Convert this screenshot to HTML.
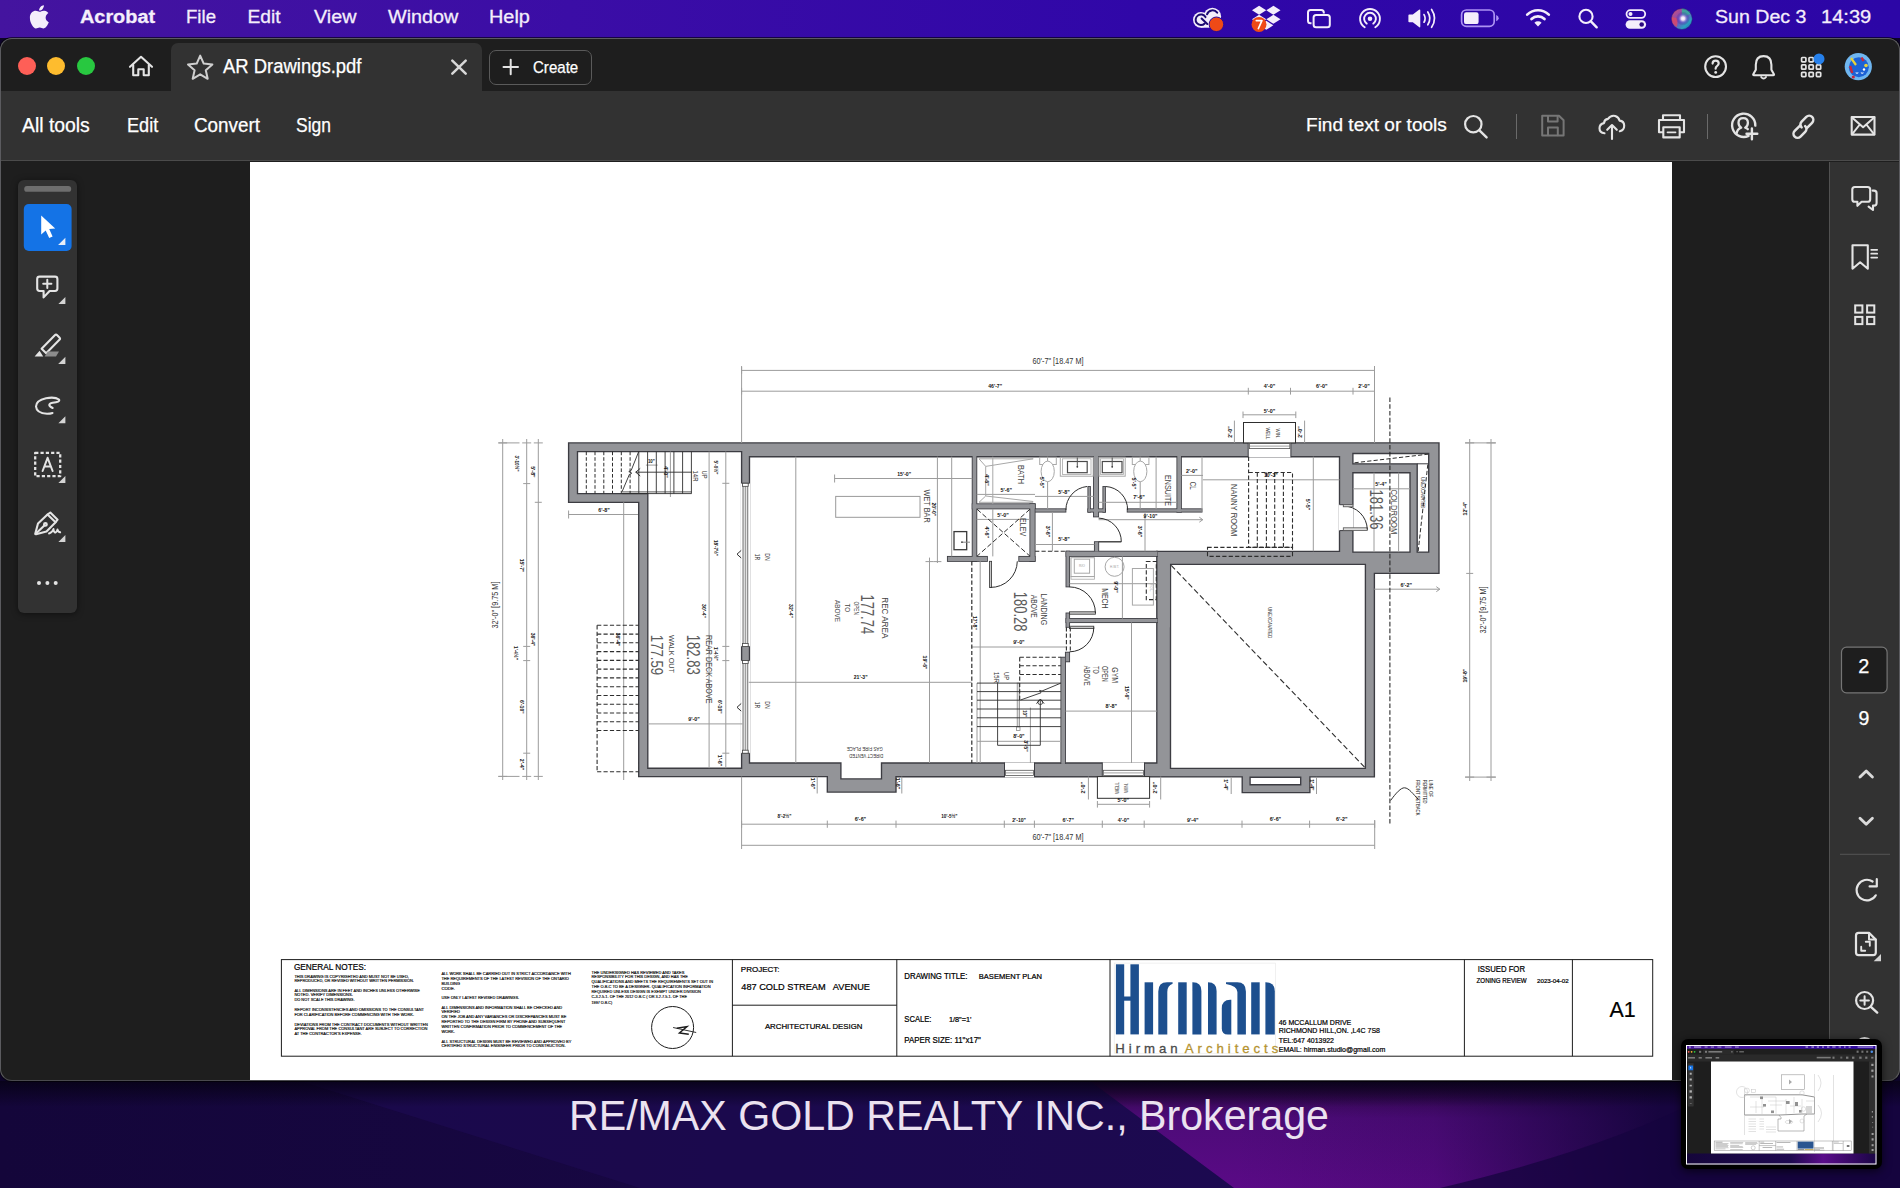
<!DOCTYPE html>
<html>
<head>
<meta charset="utf-8">
<title>AR Drawings.pdf</title>
<style>
*{box-sizing:border-box;margin:0;padding:0}
html,body{width:1900px;height:1188px;overflow:hidden;background:#17063f;font-family:"Liberation Sans",sans-serif}
.abs{position:absolute}
#wall{position:absolute;left:0;top:0;width:1900px;height:1188px;
 background:
  radial-gradient(ellipse 330px 130px at 1390px 1175px,rgba(98,10,140,.95),rgba(80,8,125,.55) 55%,rgba(60,6,110,0) 100%),
  linear-gradient(180deg,#0d0428 1081px,#1b0848 1100px,#19074a 1188px);}
#menubar{position:absolute;left:0;top:0;width:1900px;height:38px;background:linear-gradient(90deg,#44149f 0%,#3b0da6 30%,#3007a8 60%,#2c06a6 100%);}
.mt{-webkit-text-stroke:.3px #f4eefb;position:absolute;top:7.3px;color:#f4eefb;font-size:19.2px;line-height:1;white-space:nowrap;transform-origin:0 50%}
#win{position:absolute;left:0;top:38px;width:1900px;height:1043px;background:#1e1e1e;border-radius:12px 12px 12px 12px;overflow:hidden;box-shadow:0 0 0 1px rgba(0,0,0,.6)}
#winborder{position:absolute;left:0;top:38px;width:1900px;height:1043px;border-radius:12px;border:1px solid #5b5b5f;border-bottom-color:#4a4a4e;pointer-events:none}
#tabbar{position:absolute;left:0;top:0;width:1900px;height:53px;background:#1e1e1e}
#tab{position:absolute;left:171px;top:5px;width:311px;height:50px;background:#323232;border-radius:7px 7px 0 0}
#toolbar{position:absolute;left:0;top:53px;width:1900px;height:70px;background:#323232;border-bottom:1px solid #4b4b4b}
.tt{-webkit-text-stroke:.25px #fff;position:absolute;color:#fff;white-space:nowrap;transform-origin:0 50%;line-height:1}
#page{position:absolute;left:250px;top:124px;width:1422px;height:919px;background:#fff}
#rpanel{position:absolute;left:1829px;top:124px;width:71px;height:919px;background:#323232;border-left:1px solid #515151}
#palette{position:absolute;left:18px;top:142px;width:59px;height:433px;background:#323232;border-radius:6px;box-shadow:0 1px 6px rgba(0,0,0,.5)}
svg{position:absolute;overflow:visible}
</style>
</head>
<body>
<div id="wall"></div>
<svg id="wallshape" style="left:0;top:1081px" width="1900" height="107" viewBox="0 1081 1900 107">
 <defs>
  <linearGradient id="wg1" x1="0" y1="0" x2="1" y2="0"><stop offset="0" stop-color="#14063a"/><stop offset="1" stop-color="#1d0a52"/></linearGradient>
  <linearGradient id="wg2" x1="0" y1="0" x2="0" y2="1"><stop offset="0" stop-color="#2a0640"/><stop offset=".35" stop-color="#4d0b78"/><stop offset="1" stop-color="#5a0a86"/></linearGradient>
  <linearGradient id="wg3" x1="0" y1="0" x2="1" y2="0"><stop offset="0" stop-color="#17053f" stop-opacity="0"/><stop offset=".3" stop-color="#17053f" stop-opacity=".15"/><stop offset=".52" stop-color="#17053f" stop-opacity=".7"/><stop offset=".64" stop-color="#17053f" stop-opacity="1"/><stop offset="1" stop-color="#17053f" stop-opacity="1"/></linearGradient>
  <linearGradient id="wg4" x1="0" y1="0" x2="0" y2="1"><stop offset="0" stop-color="#070216" stop-opacity=".9"/><stop offset="1" stop-color="#070216" stop-opacity="0"/></linearGradient>
 </defs>
 <rect x="0" y="1081" width="1900" height="107" fill="url(#wg1)"/>
 <polygon points="300,1081 1090,1081 1234,1188 640,1188" fill="#1f0b55" opacity=".55"/>
 <polygon points="1090,1081 1900,1081 1900,1188 1234,1188" fill="url(#wg2)"/>
 <rect x="1234" y="1081" width="666" height="107" fill="url(#wg3)"/>
 <path d="M1440,1188 Q1600,1150 1700,1100 L1900,1081 L1900,1188 Z" fill="#16043f" opacity=".75"/>
 <rect x="0" y="1081" width="1900" height="26" fill="url(#wg4)"/>
</svg>

<!-- ===== MENU BAR ===== -->
<div id="menubar">
 <svg style="left:27.800px;top:3.900px" width="22.800" height="26.800" viewBox="0 0 170 200"><path fill="#f4eefb" d="M150.4 68.2c-1 .8-18.800 10.800-18.800 33 0 25.700 22.600 34.800 23.300 35-.1.600-3.600 12.500-11.900 24.600-7.400 10.700-15.200 21.300-27 21.300s-14.800-6.800-28.400-6.800c-13.300 0-18 7.100-28.800 7.100s-18.300-9.900-27-22C21.800 146.100 14 123.800 14 102.600c0-34 22.100-52 43.900-52 11.600 0 21.200 7.600 28.500 7.600 6.900 0 17.700-8.100 30.900-8.100 5 0 22.900.5 34.700 17.400zM109.400 36.500c5.400-6.500 9.300-15.400 9.300-24.400 0-1.200-.1-2.500-.3-3.500-8.900.3-19.400 5.900-25.800 13.300-5 5.700-9.700 14.700-9.700 23.800 0 1.400.2 2.700.3 3.200.6.100 1.500.2 2.400.2 8 0 18-5.300 23.800-12.600z"/></svg>
 <div class="mt" style="left:79.6px;font-weight:bold;transform:scaleX(1.035)" id="m_acrobat">Acrobat</div>
 <div class="mt" style="left:185.5px;transform:scaleX(.97)" id="m_file">File</div>
 <div class="mt" style="left:247.5px" id="m_edit">Edit</div>
 <div class="mt" style="left:314px;transform:scaleX(1.03)" id="m_view">View</div>
 <div class="mt" style="left:388px;transform:scaleX(1.03)" id="m_window">Window</div>
 <div class="mt" style="left:488.5px;transform:scaleX(1.037)" id="m_help">Help</div>

 <!-- creative cloud -->
 <svg style="left:1190px;top:4px" width="36" height="30" viewBox="1190 4 36 30">
  <g fill="#f4eefb"><circle cx="1200.900" cy="19.800" r="7.900"/><circle cx="1212.400" cy="16.400" r="8.700"/><rect x="1200.900" y="20" width="13" height="7.700"/></g>
  <g fill="none" stroke="#1c0a72" stroke-width="2" stroke-linecap="round">
   <path d="M1204.700,23.500 A5.300,5.300 0 1 1 1205.500,17.100"/>
   <path d="M1201.600,18.500 L1207.300,24"/>
   <path d="M1207,14.300 A5.900,5.900 0 0 1 1217.200,12.600"/>
  </g>
  <circle cx="1216.400" cy="24.300" r="7.300" fill="#ef4a17" stroke="#2d0a96" stroke-width="1"/>
 </svg>
 <!-- dropbox -->
 <svg style="left:1250px;top:4px" width="34" height="30" viewBox="1250 4 34 30">
  <g fill="#f4eefb">
   <path d="M1259.100,5.800 L1266.200,10.300 L1259.100,14.800 L1252,10.300 Z"/>
   <path d="M1273.400,5.800 L1280.500,10.300 L1273.400,14.800 L1266.300,10.300 Z"/>
   <path d="M1259.100,14.800 L1266.200,19.300 L1259.100,23.800 L1252,19.300 Z"/>
   <path d="M1273.400,14.800 L1280.500,19.300 L1273.400,23.800 L1266.300,19.300 Z"/>
   <path d="M1266.250,20.800 L1273.300,25.300 L1266.250,29.800 L1259.200,25.300 Z"/>
  </g>
  <circle cx="1259" cy="24.400" r="7.500" fill="#ef4a17"/>
  <path d="M1256.300,20.600 h5.600 l-3.500,7.900" fill="none" stroke="#fff" stroke-width="1.700" stroke-linecap="round" stroke-linejoin="round"/>
 </svg>
 <!-- window stack -->
 <svg style="left:1305px;top:6px" width="30" height="26" viewBox="1305 6 30 26">
  <g fill="none" stroke="#f4eefb" stroke-width="2">
   <path d="M1311.500,23.200 H1310.500 Q1308,23.200 1308,20.700 V12.500 Q1308,10 1310.500,10 H1321.300 Q1323.800,10 1323.800,12.500 V13.500"/>
   <rect x="1313.600" y="14.900" width="16.200" height="12.400" rx="2.500"/>
  </g>
 </svg>
 <!-- airplay-ish -->
 <svg style="left:1357px;top:5px" width="26" height="28" viewBox="1357 5 26 28">
  <g fill="none" stroke="#f4eefb" stroke-width="1.900" stroke-linecap="round">
   <path d="M1364.700,27.200 A9.900,9.900 0 1 1 1375.300,27.200"/>
   <path d="M1366.700,23.600 A5.900,5.900 0 1 1 1373.300,23.600"/>
  </g>
  <circle cx="1370" cy="18.700" r="2.300" fill="#f4eefb"/>
 </svg>
 <!-- volume -->
 <svg style="left:1406px;top:6px" width="32" height="26" viewBox="1406 6 32 26">
  <path d="M1409.200,14.600 h3.600 l6.200,-4.900 q1.300,-.8 1.300,.7 v16 q0,1.500 -1.300,.7 l-6.200,-4.900 h-3.600 q-.8,0 -.8,-.8 v-6 q0,-.8 .8,-.8z" fill="#f4eefb"/>
  <g fill="none" stroke="#f4eefb" stroke-width="1.700" stroke-linecap="round">
   <path d="M1424,14.600 q2.300,3.800 0,7.600"/>
   <path d="M1427.800,12 q4.100,6.400 0,12.800"/>
   <path d="M1431.600,9.500 q5.900,8.900 0,17.800"/>
  </g>
 </svg>
 <!-- battery -->
 <svg style="left:1458px;top:6px" width="44" height="26" viewBox="1458 6 44 26">
  <rect x="1461.600" y="10" width="32.600" height="16.300" rx="4.800" fill="none" stroke="#ad93f3" stroke-width="1.700"/>
  <rect x="1464" y="12.200" width="14.600" height="11.900" rx="2.200" fill="#f4eefb"/>
  <path d="M1496.200,15 q2.500,1 2.500,3.150 t-2.500,3.150z" fill="#ad93f3"/>
 </svg>
 <!-- wifi -->
 <svg style="left:1522px;top:5px" width="32" height="26" viewBox="1522 5 32 26">
  <g fill="none" stroke="#f4eefb" stroke-width="2.700" stroke-linecap="round">
   <path d="M1527.200,14.600 A15.600,15.600 0 0 1 1548.800,14.600"/>
   <path d="M1531.500,19 A9.400,9.400 0 0 1 1544.500,19"/>
  </g>
  <path d="M1538,26.400 L1534.400,22.700 A5.200,5.200 0 0 1 1541.600,22.700 Z" fill="#f4eefb"/>
 </svg>
 <!-- search -->
 <svg style="left:1576px;top:6px" width="26" height="26" viewBox="1576 6 26 26">
  <circle cx="1586" cy="16.400" r="6.600" fill="none" stroke="#f4eefb" stroke-width="2.100"/>
  <path d="M1590.900,21.400 L1596.700,27.300" stroke="#f4eefb" stroke-width="2.400" stroke-linecap="round"/>
 </svg>
 <!-- control center -->
 <svg style="left:1622px;top:6px" width="28" height="26" viewBox="1622 6 28 26">
  <rect x="1626.500" y="10.200" width="18.700" height="7.700" rx="3.850" fill="none" stroke="#f4eefb" stroke-width="1.800"/>
  <circle cx="1630.500" cy="14.050" r="2" fill="#f4eefb"/>
  <rect x="1625.600" y="20.200" width="20.500" height="8.600" rx="4.300" fill="#f4eefb"/>
  <circle cx="1641.700" cy="24.500" r="2.300" fill="#2a087f"/>
 </svg>
 <!-- siri -->
 <svg style="left:1670px;top:7px" width="24" height="24" viewBox="1670 7 24 24">
  <defs>
   <radialGradient id="si1" cx=".5" cy=".5" r=".5"><stop offset="0" stop-color="#fff"/><stop offset=".25" stop-color="#e9dff5"/><stop offset=".6" stop-color="#6a55c8" stop-opacity=".6"/><stop offset="1" stop-color="#2b1a7a" stop-opacity="0"/></radialGradient>
   <linearGradient id="si2" x1="0" y1="0" x2="1" y2="1"><stop offset="0" stop-color="#e0506a"/><stop offset=".45" stop-color="#7a4ac0"/><stop offset=".75" stop-color="#29a3c0"/><stop offset="1" stop-color="#2b3fb0"/></linearGradient>
  </defs>
  <circle cx="1681.800" cy="19" r="10.500" fill="url(#si2)"/>
  <path d="M1681.800,8.500 a10.500,10.500 0 0 1 9,5 q-4,3 -9,3z" fill="#2fb79a" opacity=".8"/>
  <path d="M1671.500,17 a10.500,10.500 0 0 0 5,10 q2,-5 0,-9z" fill="#e4485f" opacity=".75"/>
  <circle cx="1683" cy="18.500" r="7" fill="url(#si1)"/>
  <circle cx="1681.800" cy="19" r="10.500" fill="none" stroke="#241070" stroke-opacity=".5" stroke-width="1"/>
 </svg>
 <div class="mt" style="left:1715px;transform:scaleX(1.02)" id="m_date">Sun Dec 3</div>
 <div class="mt" style="left:1820.5px;transform:scaleX(1.047)" id="m_time">14:39</div>
</div>

<!-- ===== WINDOW ===== -->
<div id="win">
 <div id="tabbar">
  <div class="abs" style="left:18px;top:19px;width:18px;height:18px;border-radius:50%;background:#fe5f57"></div>
  <div class="abs" style="left:47px;top:19px;width:18px;height:18px;border-radius:50%;background:#febc2e"></div>
  <div class="abs" style="left:77px;top:19px;width:18px;height:18px;border-radius:50%;background:#28c840"></div>
  <div id="tab"></div>
  <div class="tt" style="left:223.3px;top:19.1px;font-size:19.5px;transform:scaleX(.946)" id="t_tab">AR Drawings.pdf</div>
  <div class="abs" style="left:489px;top:12px;width:103px;height:35px;border:1px solid #5a5a5a;border-radius:7px;background:#1e1e1e"></div>
  <div class="tt" style="left:532.5px;top:20.5px;font-size:17.2px;transform:scaleX(.876)" id="t_create">Create</div>
 </div>
 <div id="toolbar">
  <div class="tt" style="left:22px;top:25.2px;font-size:19.5px;transform:scaleX(.993)" id="t_all">All tools</div>
  <div class="tt" style="left:126.6px;top:25.2px;font-size:19.5px;transform:scaleX(.93)" id="t_edit">Edit</div>
  <div class="tt" style="left:194px;top:25.2px;font-size:19.5px;transform:scaleX(.967)" id="t_conv">Convert</div>
  <div class="tt" style="left:296px;top:25.2px;font-size:19.5px;transform:scaleX(.895)" id="t_sign">Sign</div>
  <div class="tt" style="left:1305.5px;top:23.7px;font-size:19.2px;transform:scaleX(.993)" id="t_find">Find text or tools</div>
  <div class="abs" style="left:1516px;top:23px;width:1px;height:25px;background:#6a6a6a"></div>
  <div class="abs" style="left:1707px;top:23px;width:1px;height:25px;background:#6a6a6a"></div>
 </div>
 <div id="page"></div>
 <div id="rpanel"></div>
 <div id="palette"></div>
</div>
<div id="winborder"></div>
<!-- PLAN-START -->
<svg id="plan" style="left:0;top:0" width="1900" height="1188" viewBox="0 0 1900 1188" font-family="Liberation Sans, sans-serif">
<path d="M568.6,442.9 L1439,442.9 L1439,573.4 L1374.4,573.4 L1374.4,776.9 L1309.9,776.9 L1309.9,792.6 L1242.2,792.6 L1242.2,776.9 L896,776.6 L896,792.1 L827.3,792.1 L827.3,776.6 L638.7,776.6 L638.7,502.3 L568.6,502.3 Z M577.5,451.6 L741.6,451.6 L741.6,768.2 L647.8,768.2 L647.8,493.6 L577.5,493.6 Z M749.5,456.7 L1339.5,456.7 L1339.5,551.3 L1156.8,551.3 L1156.8,763 L881.5,763 L881.5,778.9 L840.9,778.9 L840.9,763 L749.5,763 Z M1352.9,472.7 L1410,472.7 L1410,552.1 L1352.9,552.1 Z M1352.9,453.5 L1428.7,453.5 L1428.7,552.1 L1417.2,552.1 L1417.2,463.8 L1352.9,463.8 Z M1170.5,564.4 L1365.4,564.4 L1365.4,768.3 L1170.5,768.3 Z M1250.1,777.2 L1300.7,777.2 L1300.7,784.7 L1250.1,784.7 Z" fill="#939498" fill-rule="evenodd" stroke="#3c3c42" stroke-width="1.35" stroke-linejoin="miter"/>
<path d="M1417.2,463.8 L1428.7,463.8" stroke="#3c3c42" stroke-width="1" fill="none"/>
<rect x="1248.2" y="442.3" width="42.7" height="15" fill="#fff"/>
<path d="M1248.2,442.3 L1248.2,457.3" stroke="#3c3c42" stroke-width="1" fill="none"/><path d="M1290.9,442.3 L1290.9,457.3" stroke="#3c3c42" stroke-width="1" fill="none"/>
<rect x="1249.4" y="443.6" width="40.4" height="5" fill="#fff" stroke="#555" stroke-width="0.8"/><path d="M1249.4,446.1 L1289.8,446.1" stroke="#777" stroke-width="0.7" fill="none"/>
<rect x="1004.5" y="762.4" width="30" height="15" fill="#fff"/>
<path d="M1004.5,762.4 L1004.5,777.2" stroke="#3c3c42" stroke-width="1" fill="none"/><path d="M1034.5,762.4 L1034.5,777.2" stroke="#3c3c42" stroke-width="1" fill="none"/>
<rect x="1005.5" y="770.3" width="28" height="5.3" fill="#fff" stroke="#555" stroke-width="0.8"/><path d="M1005.5,772.9 L1033.5,772.9" stroke="#777" stroke-width="0.7" fill="none"/>
<rect x="1102.3" y="762.4" width="42.2" height="15" fill="#fff"/>
<path d="M1102.3,762.4 L1102.3,777.2" stroke="#3c3c42" stroke-width="1" fill="none"/><path d="M1144.5,762.4 L1144.5,777.2" stroke="#3c3c42" stroke-width="1" fill="none"/>
<rect x="1103.3" y="770.3" width="40.2" height="5.3" fill="#fff" stroke="#555" stroke-width="0.8"/><path d="M1103.3,772.9 L1143.5,772.9" stroke="#777" stroke-width="0.7" fill="none"/>
<rect x="1338.9" y="504.7" width="14.6" height="25.9" fill="#fff"/>
<path d="M1339.5,504.7 L1352.9,504.7" stroke="#3c3c42" stroke-width="1" fill="none"/><path d="M1339.5,530.6 L1352.9,530.6" stroke="#3c3c42" stroke-width="1" fill="none"/>
<rect x="741" y="483.3" width="9.1" height="163.1" fill="#fff"/>
<path d="M741.6,483.3 L749.5,483.3" stroke="#3c3c42" stroke-width="1" fill="none"/><path d="M741.6,646.4 L749.5,646.4" stroke="#3c3c42" stroke-width="1" fill="none"/>
<rect x="743" y="483.3" width="4.8" height="163.1" fill="#e4e4e4" stroke="#555" stroke-width="0.8"/><path d="M745.4,483.3 L745.4,646.4" stroke="#777" stroke-width="0.7" fill="none"/>
<rect x="742.6" y="483.3" width="5.6" height="3" fill="#fff" stroke="#444" stroke-width="0.8"/><rect x="742.6" y="643.4" width="5.6" height="3" fill="#fff" stroke="#444" stroke-width="0.8"/>
<rect x="741" y="660.6" width="9.1" height="92.6" fill="#fff"/>
<path d="M741.6,660.6 L749.5,660.6" stroke="#3c3c42" stroke-width="1" fill="none"/><path d="M741.6,753.2 L749.5,753.2" stroke="#3c3c42" stroke-width="1" fill="none"/>
<rect x="743" y="660.6" width="4.8" height="92.6" fill="#e4e4e4" stroke="#555" stroke-width="0.8"/><path d="M745.4,660.6 L745.4,753.2" stroke="#777" stroke-width="0.7" fill="none"/>
<rect x="742.6" y="660.6" width="5.6" height="3" fill="#fff" stroke="#444" stroke-width="0.8"/><rect x="742.6" y="750.2" width="5.6" height="3" fill="#fff" stroke="#444" stroke-width="0.8"/>
<rect x="972.6" y="457.1" width="3.8" height="103.9" fill="none" stroke="#3c3c42" stroke-width="1.7"/>
<rect x="947.8" y="556.8" width="39.2" height="4.2" fill="none" stroke="#3c3c42" stroke-width="1.7"/>
<rect x="1019.2" y="556.8" width="15.5" height="4.2" fill="none" stroke="#3c3c42" stroke-width="1.7"/>
<rect x="972.6" y="504.2" width="62.2" height="4.3" fill="none" stroke="#3c3c42" stroke-width="1.7"/>
<rect x="1030.3" y="504.2" width="4.4" height="56.7" fill="none" stroke="#3c3c42" stroke-width="1.7"/>
<rect x="1035.4" y="509.2" width="30.1" height="2.5" fill="none" stroke="#3c3c42" stroke-width="1.7"/>
<rect x="1088.3" y="509.2" width="16.7" height="2.5" fill="none" stroke="#3c3c42" stroke-width="1.7"/>
<rect x="1127.6" y="509.2" width="74" height="2.5" fill="none" stroke="#3c3c42" stroke-width="1.7"/>
<rect x="1088.3" y="486.9" width="1.7" height="24.9" fill="none" stroke="#3c3c42" stroke-width="1.7"/>
<rect x="1103.3" y="486.9" width="1.7" height="24.9" fill="none" stroke="#3c3c42" stroke-width="1.7"/>
<rect x="1093.9" y="457.1" width="4.3" height="59.4" fill="none" stroke="#3c3c42" stroke-width="1.7"/>
<rect x="1177.3" y="457.1" width="3.7" height="54.7" fill="none" stroke="#3c3c42" stroke-width="1.7"/>
<rect x="1066.5" y="551.6" width="90.5" height="4.4" fill="none" stroke="#3c3c42" stroke-width="1.7"/>
<rect x="1094.8" y="542.1" width="3.5" height="9.3" fill="none" stroke="#3c3c42" stroke-width="1.7"/>
<rect x="1066.4" y="551.6" width="2.8" height="34.9" fill="none" stroke="#3c3c42" stroke-width="1.7"/>
<rect x="1066.4" y="613.4" width="2.8" height="13.5" fill="none" stroke="#3c3c42" stroke-width="1.7"/>
<rect x="1066.4" y="618.9" width="90.6" height="3.3" fill="none" stroke="#3c3c42" stroke-width="1.7"/>
<rect x="1061.3" y="657.6" width="3.8" height="105.4" fill="none" stroke="#3c3c42" stroke-width="1.7"/>
<rect x="1065.8" y="652.6" width="3.4" height="8.8" fill="none" stroke="#3c3c42" stroke-width="1.7"/>
<rect x="940" y="444" width="250" height="12" fill="#939498"/>
<rect x="1055" y="764.2" width="16" height="11.6" fill="#939498"/>
<rect x="1158" y="552.4" width="11.8" height="75" fill="#939498"/>
<rect x="972.6" y="455.8" width="3.8" height="105.2" fill="#939498"/>
<rect x="947.8" y="556.8" width="39.2" height="4.2" fill="#939498"/>
<rect x="1019.2" y="556.8" width="15.5" height="4.2" fill="#939498"/>
<rect x="972.6" y="504.2" width="62.2" height="4.3" fill="#939498"/>
<rect x="1030.3" y="504.2" width="4.4" height="56.7" fill="#939498"/>
<rect x="1035.4" y="509.2" width="30.1" height="2.5" fill="#939498"/>
<rect x="1088.3" y="509.2" width="16.7" height="2.5" fill="#939498"/>
<rect x="1127.6" y="509.2" width="74" height="2.5" fill="#939498"/>
<rect x="1088.3" y="486.9" width="1.7" height="24.9" fill="#939498"/>
<rect x="1103.3" y="486.9" width="1.7" height="24.9" fill="#939498"/>
<rect x="1093.9" y="455.8" width="4.3" height="60.7" fill="#939498"/>
<rect x="1177.3" y="455.8" width="3.7" height="56" fill="#939498"/>
<rect x="1066.5" y="551.6" width="91" height="4.4" fill="#939498"/>
<rect x="1094.8" y="542.1" width="3.5" height="9.3" fill="#939498"/>
<rect x="1066.4" y="551.6" width="2.8" height="34.9" fill="#939498"/>
<rect x="1066.4" y="613.4" width="2.8" height="13.5" fill="#939498"/>
<rect x="1066.4" y="618.9" width="91.1" height="3.3" fill="#939498"/>
<rect x="1061.3" y="657.6" width="3.8" height="106.3" fill="#939498"/>
<rect x="1065.8" y="652.6" width="3.4" height="8.8" fill="#939498"/>
<g><path d="M741.6,370.4 L1374.5,370.4" stroke="#9c9c9c" stroke-width="1" fill="none"/><path d="M741.6,391.2 L1374.5,391.2" stroke="#9c9c9c" stroke-width="1" fill="none"/><path d="M741.6,366 L741.6,442.9" stroke="#9c9c9c" stroke-width="1" fill="none"/><path d="M1374.5,366 L1374.5,442.9" stroke="#9c9c9c" stroke-width="1" fill="none"/><path d="M741.6,387.8 L741.6,394.6" stroke="#9c9c9c" stroke-width="1" fill="none"/><path d="M1248.3,387.8 L1248.3,394.6" stroke="#9c9c9c" stroke-width="1" fill="none"/><path d="M1290.5,387.8 L1290.5,394.6" stroke="#9c9c9c" stroke-width="1" fill="none"/><path d="M1353,387.8 L1353,394.6" stroke="#9c9c9c" stroke-width="1" fill="none"/><path d="M1374.5,387.8 L1374.5,394.6" stroke="#9c9c9c" stroke-width="1" fill="none"/><path d="M741.6,367 L741.6,373.8" stroke="#9c9c9c" stroke-width="1" fill="none"/><path d="M1374.5,367 L1374.5,373.8" stroke="#9c9c9c" stroke-width="1" fill="none"/><path d="M741.6,824.2 L1374.7,824.2" stroke="#9c9c9c" stroke-width="1" fill="none"/><path d="M741.6,845.3 L1374.7,845.3" stroke="#9c9c9c" stroke-width="1" fill="none"/><path d="M741.6,776.6 L741.6,849" stroke="#9c9c9c" stroke-width="1" fill="none"/><path d="M1374.7,820 L1374.7,849" stroke="#9c9c9c" stroke-width="1" fill="none"/><path d="M741.6,820.6 L741.6,827.8" stroke="#9c9c9c" stroke-width="1" fill="none"/><path d="M827.3,820.6 L827.3,827.8" stroke="#9c9c9c" stroke-width="1" fill="none"/><path d="M896,820.6 L896,827.8" stroke="#9c9c9c" stroke-width="1" fill="none"/><path d="M1004.3,820.6 L1004.3,827.8" stroke="#9c9c9c" stroke-width="1" fill="none"/><path d="M1034.4,820.6 L1034.4,827.8" stroke="#9c9c9c" stroke-width="1" fill="none"/><path d="M1102.3,820.6 L1102.3,827.8" stroke="#9c9c9c" stroke-width="1" fill="none"/><path d="M1144.2,820.6 L1144.2,827.8" stroke="#9c9c9c" stroke-width="1" fill="none"/><path d="M1242,820.6 L1242,827.8" stroke="#9c9c9c" stroke-width="1" fill="none"/><path d="M1309.6,820.6 L1309.6,827.8" stroke="#9c9c9c" stroke-width="1" fill="none"/><path d="M1374.7,820.6 L1374.7,827.8" stroke="#9c9c9c" stroke-width="1" fill="none"/><path d="M502.7,439 L502.7,780" stroke="#9c9c9c" stroke-width="1" fill="none"/><path d="M498.2,442.9 L507.2,442.9" stroke="#9c9c9c" stroke-width="1" fill="none"/><path d="M498.2,776.4 L507.2,776.4" stroke="#9c9c9c" stroke-width="1" fill="none"/><path d="M526.7,439 L526.7,780" stroke="#9c9c9c" stroke-width="1" fill="none"/><path d="M522.2,442.9 L531.2,442.9" stroke="#9c9c9c" stroke-width="1" fill="none"/><path d="M522.2,776.4 L531.2,776.4" stroke="#9c9c9c" stroke-width="1" fill="none"/><path d="M538.3,439 L538.3,780" stroke="#9c9c9c" stroke-width="1" fill="none"/><path d="M533.8,442.9 L542.8,442.9" stroke="#9c9c9c" stroke-width="1" fill="none"/><path d="M533.8,776.4 L542.8,776.4" stroke="#9c9c9c" stroke-width="1" fill="none"/><path d="M523.2,483.6 L530.2,483.6" stroke="#9c9c9c" stroke-width="1" fill="none"/><path d="M523.2,646.4 L530.2,646.4" stroke="#9c9c9c" stroke-width="1" fill="none"/><path d="M523.2,660.6 L530.2,660.6" stroke="#9c9c9c" stroke-width="1" fill="none"/><path d="M523.2,753.2 L530.2,753.2" stroke="#9c9c9c" stroke-width="1" fill="none"/><path d="M534.8,502.3 L541.8,502.3" stroke="#9c9c9c" stroke-width="1" fill="none"/><path d="M1469.7,439 L1469.7,781" stroke="#9c9c9c" stroke-width="1" fill="none"/><path d="M1465.2,442.9 L1474.2,442.9" stroke="#9c9c9c" stroke-width="1" fill="none"/><path d="M1465.2,777.1 L1474.2,777.1" stroke="#9c9c9c" stroke-width="1" fill="none"/><path d="M1491,439 L1491,781" stroke="#9c9c9c" stroke-width="1" fill="none"/><path d="M1486.5,442.9 L1495.5,442.9" stroke="#9c9c9c" stroke-width="1" fill="none"/><path d="M1486.5,777.1 L1495.5,777.1" stroke="#9c9c9c" stroke-width="1" fill="none"/><path d="M1466.2,573.4 L1473.2,573.4" stroke="#9c9c9c" stroke-width="1" fill="none"/><path d="M1465,442.9 L1496,442.9" stroke="#9c9c9c" stroke-width="1" fill="none"/><path d="M1465,777.1 L1496,777.1" stroke="#9c9c9c" stroke-width="1" fill="none"/><path d="M498.5,442.9 L519.5,442.9" stroke="#9c9c9c" stroke-width="1" fill="none"/><path d="M498.5,776.4 L519.5,776.4" stroke="#9c9c9c" stroke-width="1" fill="none"/><path d="M623.7,502.3 L623.7,780" stroke="#9c9c9c" stroke-width="1" fill="none"/><path d="M709.1,451.6 L709.1,768.2" stroke="#9c9c9c" stroke-width="1" fill="none"/><path d="M725.8,451.6 L725.8,768.2" stroke="#9c9c9c" stroke-width="1" fill="none"/><path d="M795.8,456.7 L795.8,763" stroke="#9c9c9c" stroke-width="1" fill="none"/><path d="M937.4,456.7 L937.4,563" stroke="#9c9c9c" stroke-width="1" fill="none"/><path d="M951.7,456.7 L951.7,556.4" stroke="#9c9c9c" stroke-width="1" fill="none"/><path d="M929.5,561.6 L929.5,763" stroke="#9c9c9c" stroke-width="1" fill="none"/><path d="M980.2,561.3 L980.2,763" stroke="#9c9c9c" stroke-width="1" fill="none"/><path d="M977,683 L977,763" stroke="#9c9c9c" stroke-width="1" fill="none"/><path d="M1030.4,707.6 L1030.4,763" stroke="#9c9c9c" stroke-width="1" fill="none"/><path d="M1131.5,622.5 L1131.5,763" stroke="#9c9c9c" stroke-width="1" fill="none"/><path d="M1122.4,556.4 L1122.4,618.5" stroke="#9c9c9c" stroke-width="1" fill="none"/><path d="M992.8,508.9 L992.8,556.4" stroke="#9c9c9c" stroke-width="1" fill="none"/><path d="M1052.4,512.1 L1052.4,551.3" stroke="#9c9c9c" stroke-width="1" fill="none"/><path d="M1145,512.1 L1145,551.3" stroke="#9c9c9c" stroke-width="1" fill="none"/><path d="M1202,456.7 L1202,512.1" stroke="#9c9c9c" stroke-width="1" fill="none"/><path d="M1156.1,456.7 L1156.1,508.9" stroke="#9c9c9c" stroke-width="1" fill="none"/><path d="M1313.3,456.7 L1313.3,551.3" stroke="#9c9c9c" stroke-width="1" fill="none"/><path d="M1374,472.7 L1374,552.1" stroke="#9c9c9c" stroke-width="1" fill="none"/><path d="M1398.6,472.7 L1398.6,552.1" stroke="#9c9c9c" stroke-width="1" fill="none"/><path d="M670.4,451.6 L670.4,497" stroke="#9c9c9c" stroke-width="1" fill="none"/><path d="M1234.4,420.6 L1234.4,442.9" stroke="#9c9c9c" stroke-width="1" fill="none"/><path d="M1304.6,420.6 L1304.6,442.9" stroke="#9c9c9c" stroke-width="1" fill="none"/><path d="M1088.4,776.6 L1088.4,799.5" stroke="#9c9c9c" stroke-width="1" fill="none"/><path d="M1160.7,776.6 L1160.7,799.5" stroke="#9c9c9c" stroke-width="1" fill="none"/><path d="M817.2,776.6 L817.2,793.5" stroke="#9c9c9c" stroke-width="1" fill="none"/><path d="M901.8,776.6 L901.8,793.5" stroke="#9c9c9c" stroke-width="1" fill="none"/><path d="M1231.2,776.9 L1231.2,794" stroke="#9c9c9c" stroke-width="1" fill="none"/><path d="M1316.5,776.9 L1316.5,794" stroke="#9c9c9c" stroke-width="1" fill="none"/><path d="M1047.6,456.7 L1047.6,508.9" stroke="#9c9c9c" stroke-width="1" fill="none"/><path d="M1140.2,456.7 L1140.2,508.9" stroke="#9c9c9c" stroke-width="1" fill="none"/><path d="M722.3,483.3 L729.3,483.3" stroke="#9c9c9c" stroke-width="1" fill="none"/><path d="M722.3,646.4 L729.3,646.4" stroke="#9c9c9c" stroke-width="1" fill="none"/><path d="M722.3,660.6 L729.3,660.6" stroke="#9c9c9c" stroke-width="1" fill="none"/><path d="M722.3,753.2 L729.3,753.2" stroke="#9c9c9c" stroke-width="1" fill="none"/><path d="M568.6,514.5 L638,514.5" stroke="#9c9c9c" stroke-width="1" fill="none"/><path d="M568.6,510.5 L568.6,518.5" stroke="#9c9c9c" stroke-width="1" fill="none"/><path d="M834.6,478.5 L972.2,478.5" stroke="#9c9c9c" stroke-width="1" fill="none"/><path d="M834.6,474.5 L834.6,482.5" stroke="#9c9c9c" stroke-width="1" fill="none"/><path d="M647.8,723.9 L742.7,723.9" stroke="#9c9c9c" stroke-width="1" fill="none"/><path d="M748.7,682.3 L972.2,682.3" stroke="#9c9c9c" stroke-width="1" fill="none"/><path d="M971.8,647 L1067.2,647" stroke="#9c9c9c" stroke-width="1" fill="none"/><path d="M977,741.3 L1060.9,741.3" stroke="#9c9c9c" stroke-width="1" fill="none"/><path d="M1065.5,711.1 L1156.8,711.1" stroke="#9c9c9c" stroke-width="1" fill="none"/><path d="M1069.6,583.7 L1156.8,583.7" stroke="#9c9c9c" stroke-width="1" fill="none"/><path d="M976.7,519.4 L1030,519.4" stroke="#9c9c9c" stroke-width="1" fill="none"/><path d="M976.7,494.4 L1035,494.4" stroke="#9c9c9c" stroke-width="1" fill="none"/><path d="M1035,496.4 L1093.6,496.4" stroke="#9c9c9c" stroke-width="1" fill="none"/><path d="M1098.6,502.3 L1177,502.3" stroke="#9c9c9c" stroke-width="1" fill="none"/><path d="M1035,544.5 L1094.4,544.5" stroke="#9c9c9c" stroke-width="1" fill="none"/><path d="M1098.6,519.7 L1202.8,519.7" stroke="#9c9c9c" stroke-width="1" fill="none"/><path d="M1181.4,475.4 L1203,475.4" stroke="#9c9c9c" stroke-width="1" fill="none"/><path d="M1202.8,479.8 L1339.5,479.8" stroke="#9c9c9c" stroke-width="1" fill="none"/><path d="M1352.9,488.8 L1410,488.8" stroke="#9c9c9c" stroke-width="1" fill="none"/><path d="M1374.2,589.2 L1439.8,589.2" stroke="#9c9c9c" stroke-width="1" fill="none"/><path d="M1243,414.8 L1295.8,414.8" stroke="#9c9c9c" stroke-width="1" fill="none"/><path d="M1097.4,804.3 L1149.6,804.3" stroke="#9c9c9c" stroke-width="1" fill="none"/><path d="M645.9,465.1 L657.7,465.1" stroke="#9c9c9c" stroke-width="1" fill="none"/><path d="M1243,411.5 L1243,418.1" stroke="#9c9c9c" stroke-width="1" fill="none"/><path d="M1295.8,411.5 L1295.8,418.1" stroke="#9c9c9c" stroke-width="1" fill="none"/><path d="M1097.4,801 L1097.4,807.6" stroke="#9c9c9c" stroke-width="1" fill="none"/><path d="M1149.6,801 L1149.6,807.6" stroke="#9c9c9c" stroke-width="1" fill="none"/><path d="M929.5,557.6 L929.5,565.6" stroke="#9c9c9c" stroke-width="1" fill="none"/><path d="M933.4,561.6 L941.4,561.6" stroke="#9c9c9c" stroke-width="1" fill="none"/><path d="M925.5,561.6 L933.5,561.6" stroke="#9c9c9c" stroke-width="1" fill="none"/><path d="M1436.3,586.7 L1439.8,589.2" stroke="#9c9c9c" stroke-width="1" fill="none"/><path d="M1436.3,591.7 L1439.8,589.2" stroke="#9c9c9c" stroke-width="1" fill="none"/><path d="M1199.3,517.2 L1202.8,519.7" stroke="#9c9c9c" stroke-width="1" fill="none"/><path d="M1199.3,522.2 L1202.8,519.7" stroke="#9c9c9c" stroke-width="1" fill="none"/></g>
<g><rect x="835.7" y="496.4" width="84.3" height="20.9" fill="none" stroke="#9a9a9a" stroke-width="1"/><path d="M979,458.8 L985.7,466.4 L985.7,496 L979,502.3 M985.7,466.4 L1033.2,458.8 M985.7,496 L1033.2,501.5 M979,458.8 H1033.2 M979,502.3 H1033.2" stroke="#a8a8a8" stroke-width="1" fill="none"/><path d="M992.8,456.7 L992.8,503.9" stroke="#a8a8a8" stroke-width="1" fill="none"/><rect x="1039.7" y="457.2" width="16.6" height="7.3" fill="none" stroke="#a8a8a8" stroke-width="1"/><ellipse cx="1047.7" cy="471.4" rx="6.6" ry="10.3" fill="#fff" stroke="#a8a8a8" stroke-width="1"/><rect x="1132.3" y="457.2" width="16.6" height="7.3" fill="none" stroke="#a8a8a8" stroke-width="1"/><ellipse cx="1140.3" cy="471.4" rx="6.6" ry="10.3" fill="#fff" stroke="#a8a8a8" stroke-width="1"/><rect x="1060.3" y="457.2" width="32.9" height="19" fill="none" stroke="#a8a8a8" stroke-width="1"/><rect x="1099" y="457.2" width="26.2" height="19" fill="none" stroke="#a8a8a8" stroke-width="1"/><rect x="1062.5" y="458.8" width="28.5" height="15.7" fill="none" stroke="#a8a8a8" stroke-width="0.8"/><rect x="1100.5" y="458.8" width="23.1" height="15.7" fill="none" stroke="#a8a8a8" stroke-width="0.8"/><rect x="1067.5" y="461.5" width="19.7" height="11.2" fill="#fff" stroke="#4a4a4a" stroke-width="1.2"/><path d="M1077.3,457.5 L1077.3,466.5" stroke="#555" stroke-width="1" fill="none"/><circle cx="1077.3" cy="466.8" r=".9" fill="#333"/><rect x="1102.3" y="461.5" width="19.7" height="11.2" fill="#fff" stroke="#4a4a4a" stroke-width="1.2"/><path d="M1112.2,457.5 L1112.2,466.5" stroke="#555" stroke-width="1" fill="none"/><circle cx="1112.2" cy="466.8" r=".9" fill="#333"/><rect x="954" y="531.6" width="12.7" height="18.1" fill="#fff" stroke="#3a3a3a" stroke-width="1.3"/><path d="M961,542.2 L970,542.2" stroke="#888" stroke-width="1" fill="none"/><circle cx="962" cy="542.2" r=".9" fill="#555"/><rect x="1071" y="557.7" width="23.4" height="18.9" fill="none" stroke="#a8a8a8" stroke-width="1"/><rect x="1074.3" y="559.2" width="15.3" height="14" fill="none" stroke="#a8a8a8" stroke-width="1"/><rect x="1071" y="576.6" width="23.4" height="2.6" fill="none" stroke="#a8a8a8" stroke-width="0.8"/><circle cx="1114.6" cy="566.8" r="9.5" fill="none" stroke="#a8a8a8" stroke-width="1"/><rect x="1132.4" y="568.5" width="21" height="36.6" fill="none" stroke="#a8a8a8" stroke-width="1"/><rect x="1146.3" y="561.5" width="10" height="38.1" fill="none" stroke="#2e2e2e" stroke-width="1.1" stroke-dasharray="4.2 2.2"/><rect x="1017.2" y="683.1" width="2.2" height="45.9" fill="#ddd" stroke="#8a8a8a" stroke-width="0.8"/><rect x="1016.6" y="727" width="3.4" height="3.5" fill="#fff" stroke="#8a8a8a" stroke-width="0.8"/></g>
<g><path d="M586.3,451.6 L586.3,493.6" stroke="#2e2e2e" stroke-width="1" fill="none" stroke-dasharray="3.6 2"/><path d="M595,451.6 L595,493.6" stroke="#2e2e2e" stroke-width="1" fill="none" stroke-dasharray="3.6 2"/><path d="M603.8,451.6 L603.8,493.6" stroke="#2e2e2e" stroke-width="1" fill="none" stroke-dasharray="3.6 2"/><path d="M612.5,451.6 L612.5,493.6" stroke="#2e2e2e" stroke-width="1" fill="none" stroke-dasharray="3.6 2"/><path d="M621.3,451.6 L621.3,493.6" stroke="#2e2e2e" stroke-width="1" fill="none" stroke-dasharray="3.6 2"/><path d="M630.1,451.6 L630.1,493.6" stroke="#2e2e2e" stroke-width="1" fill="none" stroke-dasharray="3.6 2"/><path d="M638.8,451.6 L638.8,493.6" stroke="#2e2e2e" stroke-width="0.9" fill="none"/><path d="M647.6,451.6 L647.6,493.6" stroke="#2e2e2e" stroke-width="0.9" fill="none"/><path d="M656.3,451.6 L656.3,493.6" stroke="#2e2e2e" stroke-width="0.9" fill="none"/><path d="M665.1,451.6 L665.1,493.6" stroke="#2e2e2e" stroke-width="0.9" fill="none"/><path d="M673.9,451.6 L673.9,493.6" stroke="#2e2e2e" stroke-width="0.9" fill="none"/><path d="M682.6,451.6 L682.6,493.6" stroke="#2e2e2e" stroke-width="0.9" fill="none"/><path d="M691.4,451.6 L691.4,493.6" stroke="#2e2e2e" stroke-width="0.9" fill="none"/><path d="M622.1,493.6 L691.6,493.6" stroke="#2e2e2e" stroke-width="0.9" fill="none"/><path d="M622.1,491.9 L691.6,491.9" stroke="#2e2e2e" stroke-width="0.8" fill="none"/><path d="M638.7,451.6 L631.2,470.4 L628.8,471.6 L631.8,473.2 L629.4,474.4 L622.1,491.6" stroke="#2e2e2e" stroke-width=".9" fill="none"/><path d="M635.6,472.2 L691.7,472.2" stroke="#2e2e2e" stroke-width="0.9" fill="none"/><path d="M640.2,468.4 L635.8,472.2 L640.2,476" stroke="#2e2e2e" stroke-width="1" fill="none"/><path d="M597.1,625.3 L638.7,625.3" stroke="#2e2e2e" stroke-width="1.1" fill="none" stroke-dasharray="4.2 2.2"/><path d="M597.1,634.1 L638.7,634.1" stroke="#2e2e2e" stroke-width="1.1" fill="none" stroke-dasharray="4.2 2.2"/><path d="M597.1,642.8 L638.7,642.8" stroke="#2e2e2e" stroke-width="1.1" fill="none" stroke-dasharray="4.2 2.2"/><path d="M597.1,651.6 L638.7,651.6" stroke="#2e2e2e" stroke-width="1.1" fill="none" stroke-dasharray="4.2 2.2"/><path d="M597.1,660.4 L638.7,660.4" stroke="#2e2e2e" stroke-width="1.1" fill="none" stroke-dasharray="4.2 2.2"/><path d="M597.1,669.1 L638.7,669.1" stroke="#2e2e2e" stroke-width="1.1" fill="none" stroke-dasharray="4.2 2.2"/><path d="M597.1,677.9 L638.7,677.9" stroke="#2e2e2e" stroke-width="1.1" fill="none" stroke-dasharray="4.2 2.2"/><path d="M597.1,686.7 L638.7,686.7" stroke="#2e2e2e" stroke-width="1.1" fill="none" stroke-dasharray="4.2 2.2"/><path d="M597.1,695.5 L638.7,695.5" stroke="#2e2e2e" stroke-width="1.1" fill="none" stroke-dasharray="4.2 2.2"/><path d="M597.1,704.2 L638.7,704.2" stroke="#2e2e2e" stroke-width="1.1" fill="none" stroke-dasharray="4.2 2.2"/><path d="M597.1,713 L638.7,713" stroke="#2e2e2e" stroke-width="1.1" fill="none" stroke-dasharray="4.2 2.2"/><path d="M597.1,721.8 L638.7,721.8" stroke="#2e2e2e" stroke-width="1.1" fill="none" stroke-dasharray="4.2 2.2"/><path d="M597.1,730.5 L638.7,730.5" stroke="#2e2e2e" stroke-width="1.1" fill="none" stroke-dasharray="4.2 2.2"/><path d="M597.1,625.3 L597.1,771.7" stroke="#2e2e2e" stroke-width="1.1" fill="none" stroke-dasharray="4.2 2.2"/><path d="M597.1,771.7 L638.7,771.7" stroke="#2e2e2e" stroke-width="1.1" fill="none" stroke-dasharray="4.2 2.2"/><path d="M741.2,550.4 L737,554.2 L741.2,558" stroke="#2e2e2e" stroke-width="1" fill="none"/><path d="M741.2,703.5 L737,707.3 L741.2,711.1" stroke="#2e2e2e" stroke-width="1" fill="none"/><path d="M977,509.2 L1030,556.2" stroke="#2e2e2e" stroke-width="1" fill="none" stroke-dasharray="5 2.4"/><path d="M1030,509.2 L977,556.2" stroke="#2e2e2e" stroke-width="1" fill="none" stroke-dasharray="5 2.4"/><rect x="989.4" y="561.3" width="2.2" height="26.1" fill="#c8c8c8" stroke="#333" stroke-width="0.8"/><path d="M990.4,587.4 A26.5,26.5 0 0 0 1017.3,561.3" stroke="#2e2e2e" stroke-width="1" fill="none"/><path d="M1087,486.5 A23.5,23.5 0 0 0 1065.9,510" stroke="#2e2e2e" stroke-width="1" fill="none"/><path d="M1105.6,486.5 A23,23 0 0 1 1127.6,510" stroke="#2e2e2e" stroke-width="1" fill="none"/><path d="M1098.6,541.8 L1121.3,541.8" stroke="#2e2e2e" stroke-width="1.3" fill="none"/><path d="M1098.6,518.1 A23.4,23.4 0 0 1 1121.3,541.8" stroke="#2e2e2e" stroke-width="1" fill="none"/><rect x="1069.6" y="611.8" width="25.8" height="2.4" fill="#c8c8c8" stroke="#333" stroke-width="0.8"/><path d="M1069.6,586.9 A26,26 0 0 1 1095.4,613" stroke="#2e2e2e" stroke-width="1" fill="none"/><rect x="1069.6" y="626.2" width="24.2" height="2.4" fill="#c8c8c8" stroke="#333" stroke-width="0.8"/><path d="M1093.8,627.4 A24.4,24.4 0 0 1 1069.6,651.8" stroke="#2e2e2e" stroke-width="1" fill="none"/><rect x="1343.3" y="527.8" width="24" height="2.6" fill="#ddd" stroke="#555" stroke-width="0.8"/><path d="M1343.3,506 A24,24 0 0 1 1367.3,529.6" stroke="#2e2e2e" stroke-width="1" fill="none"/><rect x="1343.3" y="504.7" width="9.6" height="2.1" fill="#ddd" stroke="#555" stroke-width="0.8"/><path d="M971.8,561.3 L971.8,763" stroke="#2e2e2e" stroke-width="1.2" fill="none" stroke-dasharray="4.2 2.2"/><path d="M1035.1,551.3 L1066.2,551.3" stroke="#2e2e2e" stroke-width="1.1" fill="none" stroke-dasharray="4.2 2.2"/><path d="M1070.3,627.2 L1070.3,652.2" stroke="#2e2e2e" stroke-width="1.1" fill="none" stroke-dasharray="4.2 2.2"/><path d="M1066.4,627.2 L1066.4,652.2" stroke="#2e2e2e" stroke-width="1.1" fill="none" stroke-dasharray="4.2 2.2"/><path d="M1389.9,397.4 L1389.9,825.8" stroke="#222" stroke-width="1.05" fill="none" stroke-dasharray="4.6 2.2"/><path d="M1171.2,565.4 L1364.8,767.4" stroke="#2e2e2e" stroke-width="1.1" fill="none" stroke-dasharray="5.5 2.8"/><path d="M1354.5,462.8 L1428,454.2" stroke="#2e2e2e" stroke-width="1" fill="none" stroke-dasharray="4.2 2.2"/><path d="M1427.8,464.5 L1418.2,551" stroke="#2e2e2e" stroke-width="1" fill="none" stroke-dasharray="4.2 2.2"/><rect x="1248.6" y="472.5" width="43.9" height="74.9" fill="none" stroke="#2e2e2e" stroke-width="1.1" stroke-dasharray="4.2 2.2"/><path d="M1257.3,472.5 L1257.3,547.4" stroke="#2e2e2e" stroke-width="1.1" fill="none" stroke-dasharray="4.2 2.2"/><path d="M1266.4,472.5 L1266.4,547.4" stroke="#2e2e2e" stroke-width="1.1" fill="none" stroke-dasharray="4.2 2.2"/><path d="M1274.7,472.5 L1274.7,547.4" stroke="#2e2e2e" stroke-width="1.1" fill="none" stroke-dasharray="4.2 2.2"/><path d="M1283.4,472.5 L1283.4,547.4" stroke="#2e2e2e" stroke-width="1.1" fill="none" stroke-dasharray="4.2 2.2"/><path d="M1248.6,456.7 L1248.6,472.5" stroke="#2e2e2e" stroke-width="1.1" fill="none" stroke-dasharray="4.2 2.2"/><rect x="1207.5" y="547.4" width="85" height="9" fill="none" stroke="#2e2e2e" stroke-width="1.1" stroke-dasharray="4.2 2.2"/><path d="M977,683.1 L1060.9,683.1" stroke="#2e2e2e" stroke-width="0.9" fill="none"/><path d="M977,691.6 L1060.9,691.6" stroke="#2e2e2e" stroke-width="0.9" fill="none"/><path d="M977,700.2 L1060.9,700.2" stroke="#2e2e2e" stroke-width="0.9" fill="none"/><path d="M977,709 L1060.9,709" stroke="#2e2e2e" stroke-width="0.9" fill="none"/><path d="M977,717.8 L1060.9,717.8" stroke="#2e2e2e" stroke-width="0.9" fill="none"/><path d="M977,726.6 L1060.9,726.6" stroke="#2e2e2e" stroke-width="0.9" fill="none"/><path d="M1019.7,657.3 L1060.9,657.3" stroke="#2e2e2e" stroke-width="1.1" fill="none" stroke-dasharray="4.2 2.2"/><path d="M1019.7,665.8 L1060.9,665.8" stroke="#2e2e2e" stroke-width="1.1" fill="none" stroke-dasharray="4.2 2.2"/><path d="M1019.7,674.5 L1060.9,674.5" stroke="#2e2e2e" stroke-width="1.1" fill="none" stroke-dasharray="4.2 2.2"/><path d="M1019.7,657.3 L1019.7,700" stroke="#2e2e2e" stroke-width="1.1" fill="none" stroke-dasharray="4.2 2.2"/><path d="M997.6,683.1 V745.3 H1040.3 V700.5" stroke="#2e2e2e" stroke-width=".9" fill="none"/><path d="M1060.9,683.1 L1042,691 L1039.6,690.4 L1041,692.8 L1020.5,700" stroke="#2e2e2e" stroke-width=".9" fill="none"/><path d="M1036.5,703.6 L1040.3,699.2 L1044.1,703.6" stroke="#2e2e2e" stroke-width="1" fill="none"/><circle cx="1040.3" cy="702.2" r="2.4" fill="none" stroke="#2e2e2e" stroke-width=".8"/><rect x="1243.5" y="422.5" width="52" height="20.4" fill="#fff" stroke="#2e2e2e" stroke-width="1"/><rect x="1097.4" y="776.6" width="52.2" height="21.7" fill="#fff" stroke="#2e2e2e" stroke-width="1"/><path d="M1390.6,800.5 C1396,793 1401,787.6 1404.5,787.8 C1409,788 1413,794 1418.6,799.7" stroke="#2e2e2e" stroke-width="1" fill="none"/></g>
<text x="656.9" y="655" font-size="17.3" fill="#5c5c5c" text-anchor="middle" transform="rotate(90 656.9 655)" textLength="40.4" lengthAdjust="spacingAndGlyphs" dy="6">177.59</text>
<text x="671.6" y="654.1" font-size="8" fill="#444" text-anchor="middle" transform="rotate(90 671.6 654.1)" textLength="38" lengthAdjust="spacingAndGlyphs" dy="2.8">WALK OUT</text>
<text x="693" y="654.7" font-size="18" fill="#5c5c5c" text-anchor="middle" transform="rotate(90 693 654.7)" textLength="39.9" lengthAdjust="spacingAndGlyphs" dy="6.2">182.83</text>
<text x="709.1" y="669.3" font-size="9" fill="#444" text-anchor="middle" transform="rotate(90 709.1 669.3)" textLength="68.5" lengthAdjust="spacingAndGlyphs" dy="3.1">REAR DECK ABOVE</text>
<text x="885" y="617.8" font-size="8.5" fill="#444" text-anchor="middle" transform="rotate(90 885 617.8)" textLength="41" lengthAdjust="spacingAndGlyphs" dy="2.9">REC  AREA</text>
<text x="867.2" y="614.3" font-size="19" fill="#5c5c5c" text-anchor="middle" transform="rotate(90 867.2 614.3)" textLength="39.7" lengthAdjust="spacingAndGlyphs" dy="6.5">177.74</text>
<text x="856.3" y="608.2" font-size="7.5" fill="#444" text-anchor="middle" transform="rotate(90 856.3 608.2)" textLength="13.6" lengthAdjust="spacingAndGlyphs" dy="2.6">OPEN</text>
<text x="847.3" y="607.8" font-size="7.5" fill="#444" text-anchor="middle" transform="rotate(90 847.3 607.8)" textLength="8.4" lengthAdjust="spacingAndGlyphs" dy="2.6">TO</text>
<text x="838" y="611" font-size="7.5" fill="#444" text-anchor="middle" transform="rotate(90 838 611)" textLength="21.9" lengthAdjust="spacingAndGlyphs" dy="2.6">ABOVE</text>
<text x="926.8" y="506.2" font-size="8.5" fill="#444" text-anchor="middle" transform="rotate(90 926.8 506.2)" textLength="33.2" lengthAdjust="spacingAndGlyphs" dy="2.9">WET BAR</text>
<text x="1021.3" y="474.6" font-size="8.5" fill="#444" text-anchor="middle" transform="rotate(90 1021.3 474.6)" textLength="19" lengthAdjust="spacingAndGlyphs" dy="2.9">BATH</text>
<text x="1022.9" y="527.2" font-size="8.5" fill="#444" text-anchor="middle" transform="rotate(90 1022.9 527.2)" textLength="18.2" lengthAdjust="spacingAndGlyphs" dy="2.9">ELEV</text>
<text x="1168" y="490.6" font-size="9.5" fill="#444" text-anchor="middle" transform="rotate(90 1168 490.6)" textLength="31.1" lengthAdjust="spacingAndGlyphs" dy="3.3">ENSUITE</text>
<text x="1192.5" y="485.7" font-size="8.5" fill="#444" text-anchor="middle" transform="rotate(90 1192.5 485.7)" textLength="8" lengthAdjust="spacingAndGlyphs" dy="2.9">CL</text>
<text x="1234.4" y="510.2" font-size="9.5" fill="#444" text-anchor="middle" transform="rotate(90 1234.4 510.2)" textLength="52.2" lengthAdjust="spacingAndGlyphs" dy="3.3">NANNY ROOM</text>
<text x="1393.6" y="511.9" font-size="8.2" fill="#444" text-anchor="middle" transform="rotate(90 1393.6 511.9)" textLength="45" lengthAdjust="spacingAndGlyphs" dy="2.8">COLDROOM</text>
<text x="1376.9" y="509.5" font-size="19" fill="#5c5c5c" text-anchor="middle" transform="rotate(90 1376.9 509.5)" textLength="40.2" lengthAdjust="spacingAndGlyphs" dy="6.5">181.36</text>
<text x="1423" y="492.7" font-size="5" fill="#333" text-anchor="middle" transform="rotate(90 1423 492.7)" textLength="31.6" lengthAdjust="spacingAndGlyphs" dy="1.7">UNEXCAVATED</text>
<text x="1269.4" y="622.7" font-size="5.5" fill="#333" text-anchor="middle" transform="rotate(90 1269.4 622.7)" textLength="31.1" lengthAdjust="spacingAndGlyphs" dy="1.9">UNEXCAVATED</text>
<text x="1043.8" y="609.4" font-size="8.5" fill="#444" text-anchor="middle" transform="rotate(90 1043.8 609.4)" textLength="32" lengthAdjust="spacingAndGlyphs" dy="2.9">LANDING</text>
<text x="1034" y="606.3" font-size="8.5" fill="#444" text-anchor="middle" transform="rotate(90 1034 606.3)" textLength="22.9" lengthAdjust="spacingAndGlyphs" dy="2.9">ABOVE</text>
<text x="1020.9" y="611.6" font-size="19" fill="#5c5c5c" text-anchor="middle" transform="rotate(90 1020.9 611.6)" textLength="39.7" lengthAdjust="spacingAndGlyphs" dy="6.5">180.28</text>
<text x="1104.9" y="598.4" font-size="9" fill="#444" text-anchor="middle" transform="rotate(90 1104.9 598.4)" textLength="20.5" lengthAdjust="spacingAndGlyphs" dy="3.1">MECH</text>
<text x="1114.7" y="675.2" font-size="8.5" fill="#444" text-anchor="middle" transform="rotate(90 1114.7 675.2)" textLength="15.8" lengthAdjust="spacingAndGlyphs" dy="2.9">GYM</text>
<text x="1104.6" y="673.9" font-size="8.5" fill="#444" text-anchor="middle" transform="rotate(90 1104.6 673.9)" textLength="15.8" lengthAdjust="spacingAndGlyphs" dy="2.9">OPEN</text>
<text x="1095.4" y="670" font-size="8.5" fill="#444" text-anchor="middle" transform="rotate(90 1095.4 670)" textLength="7.3" lengthAdjust="spacingAndGlyphs" dy="2.9">TO</text>
<text x="1086.7" y="675.7" font-size="8.5" fill="#444" text-anchor="middle" transform="rotate(90 1086.7 675.7)" textLength="20.1" lengthAdjust="spacingAndGlyphs" dy="2.9">ABOVE</text>
<text x="704.4" y="474.6" font-size="7.5" fill="#333" text-anchor="middle" transform="rotate(90 704.4 474.6)" textLength="8" lengthAdjust="spacingAndGlyphs" dy="2.6">UP</text>
<text x="695.7" y="476" font-size="7.5" fill="#333" text-anchor="middle" transform="rotate(90 695.7 476)" textLength="11" lengthAdjust="spacingAndGlyphs" dy="2.6">14R</text>
<text x="766.9" y="556.9" font-size="6.5" fill="#333" text-anchor="middle" transform="rotate(90 766.9 556.9)" textLength="7.5" lengthAdjust="spacingAndGlyphs" dy="2.2">DN</text>
<text x="757.4" y="556.9" font-size="6.5" fill="#333" text-anchor="middle" transform="rotate(90 757.4 556.9)" textLength="6.5" lengthAdjust="spacingAndGlyphs" dy="2.2">1R</text>
<text x="766.9" y="704.9" font-size="6.5" fill="#333" text-anchor="middle" transform="rotate(90 766.9 704.9)" textLength="7.5" lengthAdjust="spacingAndGlyphs" dy="2.2">DN</text>
<text x="757.4" y="704.9" font-size="6.5" fill="#333" text-anchor="middle" transform="rotate(90 757.4 704.9)" textLength="6.5" lengthAdjust="spacingAndGlyphs" dy="2.2">1R</text>
<text x="1006.3" y="676" font-size="7" fill="#333" text-anchor="middle" transform="rotate(90 1006.3 676)" textLength="8" lengthAdjust="spacingAndGlyphs" dy="2.4">UP</text>
<text x="996" y="677.5" font-size="7" fill="#333" text-anchor="middle" transform="rotate(90 996 677.5)" textLength="11" lengthAdjust="spacingAndGlyphs" dy="2.4">15R</text>
<text x="1277.9" y="433.4" font-size="6" fill="#333" text-anchor="middle" transform="rotate(90 1277.9 433.4)" textLength="10" lengthAdjust="spacingAndGlyphs" dy="2.1">WIN.</text>
<text x="1267.6" y="433.4" font-size="6" fill="#333" text-anchor="middle" transform="rotate(90 1267.6 433.4)" textLength="12" lengthAdjust="spacingAndGlyphs" dy="2.1">WELL</text>
<text x="1126.4" y="788" font-size="6" fill="#333" text-anchor="middle" transform="rotate(-90 1126.4 788)" textLength="10" lengthAdjust="spacingAndGlyphs" dy="2.1">WIN.</text>
<text x="1117.3" y="788" font-size="6" fill="#333" text-anchor="middle" transform="rotate(-90 1117.3 788)" textLength="12" lengthAdjust="spacingAndGlyphs" dy="2.1">WELL</text>
<text x="1431.2" y="788.6" font-size="5.5" fill="#222" text-anchor="middle" transform="rotate(90 1431.2 788.6)" textLength="17.4" lengthAdjust="spacingAndGlyphs" dy="1.9">LINE OF</text>
<text x="1424.9" y="791.7" font-size="5.5" fill="#222" text-anchor="middle" transform="rotate(90 1424.9 791.7)" textLength="23.7" lengthAdjust="spacingAndGlyphs" dy="1.9">PERMITTED</text>
<text x="1418.3" y="797.7" font-size="5.5" fill="#222" text-anchor="middle" transform="rotate(90 1418.3 797.7)" textLength="35.6" lengthAdjust="spacingAndGlyphs" dy="1.9">FRONT SETBACK</text>
<text x="866.2" y="755.4" font-size="5" fill="#333" text-anchor="middle" transform="rotate(180 866.2 755.4)" textLength="34" lengthAdjust="spacingAndGlyphs" dy="1.7">DIRECT VENTED</text>
<text x="864.7" y="748.7" font-size="5" fill="#333" text-anchor="middle" transform="rotate(180 864.7 748.7)" textLength="36" lengthAdjust="spacingAndGlyphs" dy="1.7">GAS FIRE PLACE</text>
<text x="1058" y="361.1" font-size="9.5" fill="#333" text-anchor="middle" textLength="51" lengthAdjust="spacingAndGlyphs" dy="3.3">60'-7" [18.47 M]</text>
<text x="1058" y="836.3" font-size="9.5" fill="#333" text-anchor="middle" textLength="51" lengthAdjust="spacingAndGlyphs" dy="3.3">60'-7" [18.47 M]</text>
<text x="494.7" y="605" font-size="9.5" fill="#333" text-anchor="middle" transform="rotate(-90 494.7 605)" textLength="47" lengthAdjust="spacingAndGlyphs" dy="3.3">32'-0" [9.75 M]</text>
<text x="1482.3" y="610" font-size="9.5" fill="#333" text-anchor="middle" transform="rotate(-90 1482.3 610)" textLength="47" lengthAdjust="spacingAndGlyphs" dy="3.3">32'-0" [9.75 M]</text>
<text x="995.2" y="386.4" font-size="5.4" fill="#111" text-anchor="middle" textLength="13.8" lengthAdjust="spacingAndGlyphs" font-weight="bold" dy="1.9">46'-7"</text>
<text x="1269.6" y="386.4" font-size="5.4" fill="#111" text-anchor="middle" textLength="11.5" lengthAdjust="spacingAndGlyphs" font-weight="bold" dy="1.9">4'-0"</text>
<text x="1321.7" y="386.4" font-size="5.4" fill="#111" text-anchor="middle" textLength="11.5" lengthAdjust="spacingAndGlyphs" font-weight="bold" dy="1.9">6'-0"</text>
<text x="1364.1" y="386.4" font-size="5.4" fill="#111" text-anchor="middle" textLength="11.5" lengthAdjust="spacingAndGlyphs" font-weight="bold" dy="1.9">2'-0"</text>
<text x="1269.6" y="410.7" font-size="5.4" fill="#111" text-anchor="middle" textLength="11.5" lengthAdjust="spacingAndGlyphs" font-weight="bold" dy="1.9">5'-0"</text>
<text x="784.5" y="816" font-size="5.4" fill="#111" text-anchor="middle" textLength="13.8" lengthAdjust="spacingAndGlyphs" font-weight="bold" dy="1.9">8'-2½"</text>
<text x="860.4" y="818.6" font-size="5.4" fill="#111" text-anchor="middle" textLength="11.5" lengthAdjust="spacingAndGlyphs" font-weight="bold" dy="1.9">6'-6"</text>
<text x="949.3" y="816" font-size="5.4" fill="#111" text-anchor="middle" textLength="16.1" lengthAdjust="spacingAndGlyphs" font-weight="bold" dy="1.9">10'-5½"</text>
<text x="1019.1" y="819.7" font-size="5.4" fill="#111" text-anchor="middle" textLength="13.8" lengthAdjust="spacingAndGlyphs" font-weight="bold" dy="1.9">2'-10"</text>
<text x="1068.3" y="819.7" font-size="5.4" fill="#111" text-anchor="middle" textLength="11.5" lengthAdjust="spacingAndGlyphs" font-weight="bold" dy="1.9">6'-7"</text>
<text x="1123.5" y="819.7" font-size="5.4" fill="#111" text-anchor="middle" textLength="11.5" lengthAdjust="spacingAndGlyphs" font-weight="bold" dy="1.9">4'-0"</text>
<text x="1192.8" y="819.7" font-size="5.4" fill="#111" text-anchor="middle" textLength="11.5" lengthAdjust="spacingAndGlyphs" font-weight="bold" dy="1.9">9'-4"</text>
<text x="1275.4" y="819.5" font-size="5.4" fill="#111" text-anchor="middle" textLength="11.5" lengthAdjust="spacingAndGlyphs" font-weight="bold" dy="1.9">6'-6"</text>
<text x="1341.8" y="819.5" font-size="5.4" fill="#111" text-anchor="middle" textLength="11.5" lengthAdjust="spacingAndGlyphs" font-weight="bold" dy="1.9">6'-2"</text>
<text x="1123.2" y="800.4" font-size="5.4" fill="#111" text-anchor="middle" textLength="11.5" lengthAdjust="spacingAndGlyphs" font-weight="bold" dy="1.9">5'-0"</text>
<text x="604" y="509.9" font-size="5.4" fill="#111" text-anchor="middle" textLength="11.5" lengthAdjust="spacingAndGlyphs" font-weight="bold" dy="1.9">6'-8"</text>
<text x="904.2" y="473.8" font-size="5.4" fill="#111" text-anchor="middle" textLength="13.8" lengthAdjust="spacingAndGlyphs" font-weight="bold" dy="1.9">15'-0"</text>
<text x="694.1" y="719.5" font-size="5.4" fill="#111" text-anchor="middle" textLength="11.5" lengthAdjust="spacingAndGlyphs" font-weight="bold" dy="1.9">9'-0"</text>
<text x="860.7" y="677.5" font-size="5.4" fill="#111" text-anchor="middle" textLength="13.8" lengthAdjust="spacingAndGlyphs" font-weight="bold" dy="1.9">21'-3"</text>
<text x="1018.9" y="642.4" font-size="5.4" fill="#111" text-anchor="middle" textLength="11.5" lengthAdjust="spacingAndGlyphs" font-weight="bold" dy="1.9">9'-0"</text>
<text x="1018.9" y="736.1" font-size="5.4" fill="#111" text-anchor="middle" textLength="11.5" lengthAdjust="spacingAndGlyphs" font-weight="bold" dy="1.9">8'-0"</text>
<text x="1111.2" y="706.4" font-size="5.4" fill="#111" text-anchor="middle" textLength="11.5" lengthAdjust="spacingAndGlyphs" font-weight="bold" dy="1.9">8'-8"</text>
<text x="1003.1" y="514.9" font-size="5.4" fill="#111" text-anchor="middle" textLength="11.5" lengthAdjust="spacingAndGlyphs" font-weight="bold" dy="1.9">5'-0"</text>
<text x="1006.3" y="490.1" font-size="5.4" fill="#111" text-anchor="middle" textLength="11.5" lengthAdjust="spacingAndGlyphs" font-weight="bold" dy="1.9">5'-6"</text>
<text x="1064" y="492" font-size="5.4" fill="#111" text-anchor="middle" textLength="11.5" lengthAdjust="spacingAndGlyphs" font-weight="bold" dy="1.9">5'-8"</text>
<text x="1064" y="539.5" font-size="5.4" fill="#111" text-anchor="middle" textLength="11.5" lengthAdjust="spacingAndGlyphs" font-weight="bold" dy="1.9">5'-8"</text>
<text x="1139" y="497.5" font-size="5.4" fill="#111" text-anchor="middle" textLength="11.5" lengthAdjust="spacingAndGlyphs" font-weight="bold" dy="1.9">7'-6"</text>
<text x="1150.5" y="515.7" font-size="5.4" fill="#111" text-anchor="middle" textLength="13.8" lengthAdjust="spacingAndGlyphs" font-weight="bold" dy="1.9">9'-10"</text>
<text x="1191.7" y="471.4" font-size="5.4" fill="#111" text-anchor="middle" textLength="11.5" lengthAdjust="spacingAndGlyphs" font-weight="bold" dy="1.9">2'-0"</text>
<text x="1270.8" y="474.6" font-size="5.4" fill="#111" text-anchor="middle" textLength="13.8" lengthAdjust="spacingAndGlyphs" font-weight="bold" dy="1.9">10'-3"</text>
<text x="1381.1" y="483.6" font-size="5.4" fill="#111" text-anchor="middle" textLength="11.5" lengthAdjust="spacingAndGlyphs" font-weight="bold" dy="1.9">5'-4"</text>
<text x="1406.3" y="585" font-size="5.4" fill="#111" text-anchor="middle" textLength="11.5" lengthAdjust="spacingAndGlyphs" font-weight="bold" dy="1.9">6'-2"</text>
<text x="651.4" y="460.8" font-size="5.4" fill="#111" text-anchor="middle" textLength="6.9" lengthAdjust="spacingAndGlyphs" font-weight="bold" dy="1.9">10"</text>
<text x="516.9" y="463.5" font-size="5.4" fill="#111" text-anchor="middle" transform="rotate(90 516.9 463.5)" textLength="16.1" lengthAdjust="spacingAndGlyphs" font-weight="bold" dy="1.9">3'-10½"</text>
<text x="532.7" y="471.9" font-size="5.4" fill="#111" text-anchor="middle" transform="rotate(90 532.7 471.9)" textLength="11.5" lengthAdjust="spacingAndGlyphs" font-weight="bold" dy="1.9">5'-8"</text>
<text x="521.6" y="565.6" font-size="5.4" fill="#111" text-anchor="middle" transform="rotate(90 521.6 565.6)" textLength="13.8" lengthAdjust="spacingAndGlyphs" font-weight="bold" dy="1.9">15'-7"</text>
<text x="516" y="653" font-size="5.4" fill="#111" text-anchor="middle" transform="rotate(90 516 653)" textLength="13.8" lengthAdjust="spacingAndGlyphs" font-weight="bold" dy="1.9">1'-4½"</text>
<text x="532.7" y="639.6" font-size="5.4" fill="#111" text-anchor="middle" transform="rotate(90 532.7 639.6)" textLength="13.8" lengthAdjust="spacingAndGlyphs" font-weight="bold" dy="1.9">36'-4"</text>
<text x="521.6" y="706.8" font-size="5.4" fill="#111" text-anchor="middle" transform="rotate(90 521.6 706.8)" textLength="13.8" lengthAdjust="spacingAndGlyphs" font-weight="bold" dy="1.9">6'-10"</text>
<text x="521.6" y="764.6" font-size="5.4" fill="#111" text-anchor="middle" transform="rotate(90 521.6 764.6)" textLength="11.5" lengthAdjust="spacingAndGlyphs" font-weight="bold" dy="1.9">2'-4"</text>
<text x="1465.1" y="508.5" font-size="5.4" fill="#111" text-anchor="middle" transform="rotate(-90 1465.1 508.5)" textLength="13.8" lengthAdjust="spacingAndGlyphs" font-weight="bold" dy="1.9">12'-4"</text>
<text x="1465.3" y="675.6" font-size="5.4" fill="#111" text-anchor="middle" transform="rotate(-90 1465.3 675.6)" textLength="13.8" lengthAdjust="spacingAndGlyphs" font-weight="bold" dy="1.9">19'-8"</text>
<text x="715.5" y="467.5" font-size="5.4" fill="#111" text-anchor="middle" transform="rotate(90 715.5 467.5)" textLength="13.8" lengthAdjust="spacingAndGlyphs" font-weight="bold" dy="1.9">5'-0½"</text>
<text x="715.5" y="548" font-size="5.4" fill="#111" text-anchor="middle" transform="rotate(90 715.5 548)" textLength="16.1" lengthAdjust="spacingAndGlyphs" font-weight="bold" dy="1.9">18'-7½"</text>
<text x="703.6" y="611" font-size="5.4" fill="#111" text-anchor="middle" transform="rotate(90 703.6 611)" textLength="13.8" lengthAdjust="spacingAndGlyphs" font-weight="bold" dy="1.9">30'-4"</text>
<text x="716.3" y="653.8" font-size="5.4" fill="#111" text-anchor="middle" transform="rotate(90 716.3 653.8)" textLength="13.8" lengthAdjust="spacingAndGlyphs" font-weight="bold" dy="1.9">1'-4½"</text>
<text x="720.2" y="706.8" font-size="5.4" fill="#111" text-anchor="middle" transform="rotate(90 720.2 706.8)" textLength="13.8" lengthAdjust="spacingAndGlyphs" font-weight="bold" dy="1.9">6'-10"</text>
<text x="720.2" y="760.6" font-size="5.4" fill="#111" text-anchor="middle" transform="rotate(90 720.2 760.6)" textLength="11.5" lengthAdjust="spacingAndGlyphs" font-weight="bold" dy="1.9">1'-6"</text>
<text x="618.2" y="639.6" font-size="5.4" fill="#111" text-anchor="middle" transform="rotate(90 618.2 639.6)" textLength="13.8" lengthAdjust="spacingAndGlyphs" font-weight="bold" dy="1.9">36'-4"</text>
<text x="665.6" y="472" font-size="5.4" fill="#111" text-anchor="middle" transform="rotate(90 665.6 472)" textLength="11.5" lengthAdjust="spacingAndGlyphs" font-weight="bold" dy="1.9">4'-0"</text>
<text x="791.1" y="611" font-size="5.4" fill="#111" text-anchor="middle" transform="rotate(90 791.1 611)" textLength="13.8" lengthAdjust="spacingAndGlyphs" font-weight="bold" dy="1.9">32'-4"</text>
<text x="924.8" y="662.5" font-size="5.4" fill="#111" text-anchor="middle" transform="rotate(90 924.8 662.5)" textLength="13.8" lengthAdjust="spacingAndGlyphs" font-weight="bold" dy="1.9">19'-6"</text>
<text x="933.5" y="509.4" font-size="5.4" fill="#111" text-anchor="middle" transform="rotate(90 933.5 509.4)" textLength="13.8" lengthAdjust="spacingAndGlyphs" font-weight="bold" dy="1.9">20'-0"</text>
<text x="974.9" y="622.9" font-size="5.4" fill="#111" text-anchor="middle" transform="rotate(90 974.9 622.9)" textLength="13.8" lengthAdjust="spacingAndGlyphs" font-weight="bold" dy="1.9">17'-8"</text>
<text x="987.3" y="480" font-size="5.4" fill="#111" text-anchor="middle" transform="rotate(90 987.3 480)" textLength="11.5" lengthAdjust="spacingAndGlyphs" font-weight="bold" dy="1.9">4'-6"</text>
<text x="987.3" y="532.3" font-size="5.4" fill="#111" text-anchor="middle" transform="rotate(90 987.3 532.3)" textLength="11.5" lengthAdjust="spacingAndGlyphs" font-weight="bold" dy="1.9">4'-6"</text>
<text x="1042.2" y="482.5" font-size="5.4" fill="#111" text-anchor="middle" transform="rotate(90 1042.2 482.5)" textLength="11.5" lengthAdjust="spacingAndGlyphs" font-weight="bold" dy="1.9">5'-5"</text>
<text x="1133.6" y="483.3" font-size="5.4" fill="#111" text-anchor="middle" transform="rotate(90 1133.6 483.3)" textLength="11.5" lengthAdjust="spacingAndGlyphs" font-weight="bold" dy="1.9">5'-5"</text>
<text x="1048.2" y="531.6" font-size="5.4" fill="#111" text-anchor="middle" transform="rotate(90 1048.2 531.6)" textLength="11.5" lengthAdjust="spacingAndGlyphs" font-weight="bold" dy="1.9">3'-6"</text>
<text x="1140.3" y="531.6" font-size="5.4" fill="#111" text-anchor="middle" transform="rotate(90 1140.3 531.6)" textLength="11.5" lengthAdjust="spacingAndGlyphs" font-weight="bold" dy="1.9">3'-6"</text>
<text x="1307.5" y="504.5" font-size="5.4" fill="#111" text-anchor="middle" transform="rotate(90 1307.5 504.5)" textLength="11.5" lengthAdjust="spacingAndGlyphs" font-weight="bold" dy="1.9">5'-5"</text>
<text x="1127" y="692.9" font-size="5.4" fill="#111" text-anchor="middle" transform="rotate(90 1127 692.9)" textLength="13.8" lengthAdjust="spacingAndGlyphs" font-weight="bold" dy="1.9">15'-6"</text>
<text x="1025.7" y="746" font-size="5.4" fill="#111" text-anchor="middle" transform="rotate(90 1025.7 746)" textLength="11.5" lengthAdjust="spacingAndGlyphs" font-weight="bold" dy="1.9">3'-5"</text>
<text x="1024.5" y="713.6" font-size="5.4" fill="#111" text-anchor="middle" transform="rotate(90 1024.5 713.6)" textLength="6.9" lengthAdjust="spacingAndGlyphs" font-weight="bold" dy="1.9">10"</text>
<text x="1230" y="432" font-size="5.4" fill="#111" text-anchor="middle" transform="rotate(-90 1230 432)" textLength="11.5" lengthAdjust="spacingAndGlyphs" font-weight="bold" dy="1.9">2'-0"</text>
<text x="1300" y="432" font-size="5.4" fill="#111" text-anchor="middle" transform="rotate(-90 1300 432)" textLength="11.5" lengthAdjust="spacingAndGlyphs" font-weight="bold" dy="1.9">2'-0"</text>
<text x="1083.6" y="787.7" font-size="5.4" fill="#111" text-anchor="middle" transform="rotate(-90 1083.6 787.7)" textLength="11.5" lengthAdjust="spacingAndGlyphs" font-weight="bold" dy="1.9">2'-0"</text>
<text x="1155.6" y="787.7" font-size="5.4" fill="#111" text-anchor="middle" transform="rotate(-90 1155.6 787.7)" textLength="11.5" lengthAdjust="spacingAndGlyphs" font-weight="bold" dy="1.9">2'-0"</text>
<text x="812.4" y="783.5" font-size="5.4" fill="#111" text-anchor="middle" transform="rotate(90 812.4 783.5)" textLength="11.5" lengthAdjust="spacingAndGlyphs" font-weight="bold" dy="1.9">1'-6"</text>
<text x="897.9" y="783.5" font-size="5.4" fill="#111" text-anchor="middle" transform="rotate(90 897.9 783.5)" textLength="11.5" lengthAdjust="spacingAndGlyphs" font-weight="bold" dy="1.9">1'-6"</text>
<text x="1226" y="784.9" font-size="5.4" fill="#111" text-anchor="middle" transform="rotate(90 1226 784.9)" textLength="11.5" lengthAdjust="spacingAndGlyphs" font-weight="bold" dy="1.9">1'-4"</text>
<text x="1311.5" y="784.9" font-size="5.4" fill="#111" text-anchor="middle" transform="rotate(90 1311.5 784.9)" textLength="11.5" lengthAdjust="spacingAndGlyphs" font-weight="bold" dy="1.9">1'-4"</text>
<text x="1116" y="587" font-size="5.4" fill="#111" text-anchor="middle" transform="rotate(90 1116 587)" textLength="11.5" lengthAdjust="spacingAndGlyphs" font-weight="bold" dy="1.9">9'-0"</text>
<text x="1082" y="566.2" font-size="3.6" fill="#999" text-anchor="middle" textLength="6" lengthAdjust="spacingAndGlyphs" dy="1.2">R/O</text>
<text x="1114.6" y="566.8" font-size="3.4" fill="#999" text-anchor="middle" textLength="9" lengthAdjust="spacingAndGlyphs" dy="1.2">H.W.T.</text>
<text x="1151.4" y="588" font-size="3.2" fill="#999" text-anchor="middle" transform="rotate(90 1151.4 588)" textLength="8" lengthAdjust="spacingAndGlyphs" dy="1.1">F.O.L.</text>
<rect x="281.4" y="959.6" width="1371.3" height="96.6" fill="none" stroke="#1c1c1c" stroke-width="1"/>
<path d="M732.4,959.6 L732.4,1056.2" stroke="#1c1c1c" stroke-width="1" fill="none"/>
<path d="M896.8,959.6 L896.8,1056.2" stroke="#1c1c1c" stroke-width="1" fill="none"/>
<path d="M1110,959.6 L1110,1056.2" stroke="#1c1c1c" stroke-width="1" fill="none"/>
<path d="M1464.4,959.6 L1464.4,1056.2" stroke="#1c1c1c" stroke-width="1" fill="none"/>
<path d="M1572.4,959.6 L1572.4,1056.2" stroke="#1c1c1c" stroke-width="1" fill="none"/>
<path d="M732.4,1005.2 L896.8,1005.2" stroke="#1c1c1c" stroke-width="1" fill="none"/>
<text x="293.9" y="969.9" font-size="9.3" fill="#000" stroke="#000" stroke-width="0.22" textLength="72.1" lengthAdjust="spacingAndGlyphs">GENERAL NOTES:</text>
<g font-size="3.8" fill="#000" stroke="#000" stroke-width=".14">
<text x="294.4" y="977.5" textLength="114.5" lengthAdjust="spacingAndGlyphs">THIS DRAWING IS COPYRIGHTED AND MUST NOT BE USED,</text>
<text x="294.4" y="982" textLength="119.5" lengthAdjust="spacingAndGlyphs">REPRODUCED, OR REVISED WITHOUT WRITTEN PERMISSION.</text>
<text x="294.4" y="991.6" textLength="125.4" lengthAdjust="spacingAndGlyphs">ALL DIMENSIONS ARE IN FEET AND INCHES UNLESS OTHERWISE</text>
<text x="294.4" y="996.3" textLength="58.4" lengthAdjust="spacingAndGlyphs">NOTED. VERIFY DIMENSIONS.</text>
<text x="294.4" y="1001" textLength="60.1" lengthAdjust="spacingAndGlyphs">DO NOT SCALE THIS DRAWING.</text>
<text x="294.4" y="1011" textLength="129.6" lengthAdjust="spacingAndGlyphs">REPORT INCONSISTENCIES AND OMISSIONS TO THE CONSULTANT</text>
<text x="294.4" y="1015.7" textLength="119.6" lengthAdjust="spacingAndGlyphs">FOR CLARIFICATION BEFORE COMMENCING WITH THE WORK.</text>
<text x="294.4" y="1025.5" textLength="133.6" lengthAdjust="spacingAndGlyphs">DEVIATIONS FROM THE CONTRACT DOCUMENTS WITHOUT WRITTEN</text>
<text x="294.4" y="1030.2" textLength="133" lengthAdjust="spacingAndGlyphs">APPROVAL FROM THE CONSULTANT ARE SUBJECT TO CORRECTION</text>
<text x="294.4" y="1034.9" textLength="67.3" lengthAdjust="spacingAndGlyphs">AT THE CONTRACTOR&#39;S EXPENSE.</text>
<text x="441.4" y="974.9" textLength="129.5" lengthAdjust="spacingAndGlyphs">ALL WORK SHALL BE CARRIED OUT IN STRICT ACCORDANCE WITH</text>
<text x="441.4" y="979.6" textLength="127.5" lengthAdjust="spacingAndGlyphs">THE REQUIREMENTS OF THE LATEST REVISION OF THE ONTARIO</text>
<text x="441.4" y="984.5" textLength="18.6" lengthAdjust="spacingAndGlyphs">BUILDING</text>
<text x="441.4" y="989.6" textLength="13.6" lengthAdjust="spacingAndGlyphs"> CODE.</text>
<text x="441.4" y="999.2" textLength="77.8" lengthAdjust="spacingAndGlyphs">USE ONLY LATEST REVISED DRAWINGS.</text>
<text x="441.4" y="1008.6" textLength="120.8" lengthAdjust="spacingAndGlyphs">ALL DIMENSIONS AND INFORMATION SHALL BE CHECKED AND</text>
<text x="441.4" y="1013.3" textLength="18.6" lengthAdjust="spacingAndGlyphs">VERIFIED</text>
<text x="441.4" y="1018.2" textLength="125" lengthAdjust="spacingAndGlyphs">ON THE JOB AND ANY VARIANCES OR DISCREPANCIES MUST BE</text>
<text x="441.4" y="1022.9" textLength="124.1" lengthAdjust="spacingAndGlyphs">REPORTED TO THE DESIGN FIRM BY PHONE AND SUBSEQUENT</text>
<text x="441.4" y="1027.8" textLength="120.8" lengthAdjust="spacingAndGlyphs">WRITTEN CONFIRMATION PRIOR TO COMMENCEMENT OF THE</text>
<text x="441.4" y="1032.9" textLength="13.5" lengthAdjust="spacingAndGlyphs">WORK.</text>
<text x="441.4" y="1042.6" textLength="130" lengthAdjust="spacingAndGlyphs">ALL STRUCTURAL DESIGN MUST BE REVIEWED AND APPROVED BY</text>
<text x="441.4" y="1047.3" textLength="124.1" lengthAdjust="spacingAndGlyphs">CERTIFIED STRUCTURAL ENGINEER PRIOR TO CONSTRUCTION.</text>
<text x="591.5" y="973.6" textLength="92.9" lengthAdjust="spacingAndGlyphs">THE UNDERSIGNED HAS REVIEWED AND TAKES</text>
<text x="591.5" y="978.3" textLength="96.3" lengthAdjust="spacingAndGlyphs">RESPONSIBILITY FOR THIS DESIGN, AND HAS THE</text>
<text x="591.5" y="983.2" textLength="121.5" lengthAdjust="spacingAndGlyphs">QUALIFICATIONS AND MEETS THE REQUIREMENTS SET OUT IN</text>
<text x="591.5" y="988.1" textLength="119" lengthAdjust="spacingAndGlyphs">THE O.B.C TO BE A DESIGNER. QUALIFICATION INFORMATION</text>
<text x="591.5" y="992.8" textLength="109.4" lengthAdjust="spacingAndGlyphs">REQUIRED UNLESS DESIGN IS EXEMPT UNDER DIVISION</text>
<text x="591.5" y="997.8" textLength="95.5" lengthAdjust="spacingAndGlyphs">C-3.2.5.1. OF THE 2012 O.B.C ( OR 3.2.7.5.1. OF THE</text>
<text x="591.5" y="1003.6" textLength="20.8" lengthAdjust="spacingAndGlyphs">1997 O.B.C)</text>
</g>
<circle cx="672.6" cy="1027.5" r="21" fill="none" stroke="#1c1c1c" stroke-width="1"/>
<path d="M676.8,1028.3 L687,1026.6 L679.4,1032.9 L688.8,1034.2" fill="none" stroke="#1c1c1c" stroke-width="1.4"/>
<path d="M673.1,1027.5 L696.2,1032.5" stroke="#1c1c1c" stroke-width="0.9" fill="none"/>
<text x="740.8" y="971.9" font-size="8.1" fill="#000" stroke="#000" stroke-width="0.22" textLength="38.8" lengthAdjust="spacingAndGlyphs">PROJECT:</text>
<text x="741.3" y="989.9" font-size="9.8" fill="#000" stroke="#000" stroke-width="0.22" textLength="128.7" lengthAdjust="spacingAndGlyphs">487 COLD STREAM   AVENUE</text>
<text x="764.9" y="1029.2" font-size="8.1" fill="#000" stroke="#000" stroke-width="0.22" textLength="97.5" lengthAdjust="spacingAndGlyphs">ARCHITECTURAL DESIGN</text>
<text x="904.3" y="978.8" font-size="8.2" fill="#000" stroke="#000" stroke-width="0.22" textLength="63.2" lengthAdjust="spacingAndGlyphs">DRAWING TITLE:</text>
<text x="978.8" y="978.8" font-size="7.7" fill="#000" stroke="#000" stroke-width="0.22" textLength="63.2" lengthAdjust="spacingAndGlyphs">BASEMENT PLAN</text>
<text x="904.3" y="1021.6" font-size="8.2" fill="#000" stroke="#000" stroke-width="0.22" textLength="27.2" lengthAdjust="spacingAndGlyphs">SCALE:</text>
<text x="948.9" y="1022.2" font-size="7" fill="#000" stroke="#000" stroke-width="0.22" textLength="22.6" lengthAdjust="spacingAndGlyphs">1/8"=1'</text>
<text x="904.3" y="1043.1" font-size="8.2" fill="#000" stroke="#000" stroke-width="0.22" textLength="76.6" lengthAdjust="spacingAndGlyphs">PAPER SIZE: 11"x17"</text>
<rect x="1114.2" y="963.1" width="161.5" height="90.1" fill="none" stroke="#e6e6e6" stroke-width="0.6"/>
<g fill="#1d4f8e"><path d="M1115.9,964.3 H1124.2 V1034.4 H1115.9 Z"/><path d="M1130.4,964.3 H1138.9 V1034.4 H1130.4 Z"/><rect x="1123.5" y="996.5" width="7.5" height="4.2"/><path d="M1144.6,982.3 H1153.1 V1034.4 H1144.6 Z"/><path d="M1158.3,1034.4 V991.5 Q1158.3,982.3 1167,982.3 H1172.6 V983.8 Q1167.3,985.5 1167.3,992 V1034.4 Z"/><path d="M1178.2,982.3 H1186.7 V1034.4 H1178.2 Z"/><path d="M1192.4,982.3 H1192.8 Q1201.4,982.3 1201.4,990.9 V1034.4 H1192.4 Z"/><path d="M1208,982.3 H1208 Q1216.6,982.3 1216.6,990.9 V1034.4 H1208 Z"/><path d="M1221.8,1008.3 Q1221.8,999.8 1230.3,999.8 H1231.3 V1034.4 H1227.8 Q1221.8,1034.4 1221.8,1028.4 Z"/><path d="M1226,982.3 H1237.3 Q1245.9,982.3 1245.9,991.5 V1034.4 H1237.4 V992 Q1237.4,986 1226,984 Z"/><path d="M1251.2,982.3 H1259.7 V1034.4 H1251.2 Z"/><path d="M1265.4,982.3 H1265.8 Q1274.8,982.3 1274.8,991.3 V1034.4 H1265.4 Z"/></g>
<text x="1115.2" y="1052.7" font-size="13.2" fill="#4a4a4a" stroke="#4a4a4a" stroke-width="0.3" textLength="62.5" lengthAdjust="spacing">Hirman</text>
<text x="1184.8" y="1052.7" font-size="13.2" fill="#b5932f" stroke="#b5932f" stroke-width="0.3" textLength="93.5" lengthAdjust="spacing">Architects</text>
<text x="1278.7" y="1025" font-size="7.6" fill="#000" stroke="#000" stroke-width="0.22" textLength="72.6" lengthAdjust="spacingAndGlyphs">46 MCCALLUM DRIVE</text>
<text x="1278.7" y="1033.2" font-size="7.6" fill="#000" stroke="#000" stroke-width="0.22" textLength="101.3" lengthAdjust="spacingAndGlyphs">RICHMOND HILL,ON. ,L4C 7S8</text>
<text x="1278.7" y="1042.6" font-size="7.6" fill="#000" stroke="#000" stroke-width="0.22" textLength="55.3" lengthAdjust="spacingAndGlyphs">TEL:647 4013922</text>
<text x="1278.7" y="1051.8" font-size="7.6" fill="#000" stroke="#000" stroke-width="0.22" textLength="106.6" lengthAdjust="spacingAndGlyphs">EMAIL: hirman.studio@gmail.com</text>
<text x="1477.7" y="972.1" font-size="8.6" fill="#000" stroke="#000" stroke-width="0.22" textLength="47.3" lengthAdjust="spacingAndGlyphs">ISSUED FOR</text>
<text x="1476.6" y="983.2" font-size="6.8" fill="#000" stroke="#000" stroke-width="0.22" textLength="50.1" lengthAdjust="spacingAndGlyphs">ZONING REVIEW</text>
<text x="1537" y="983.2" font-size="6.2" fill="#000" stroke="#000" stroke-width="0.22" textLength="31.7" lengthAdjust="spacingAndGlyphs">2023-04-02</text>
<text x="1609.6" y="1017" font-size="21.4" fill="#000" stroke="#000" stroke-width="0.22">A1</text>
</svg>
<!-- PLAN-END -->


<!-- ===== CHROME ICONS (absolute page coords) ===== -->
<svg id="chrome" style="left:0;top:0" width="1900" height="1188" viewBox="0 0 1900 1188">
 <g fill="none" stroke="#e4e4e4" stroke-width="2.100" stroke-linecap="round" stroke-linejoin="round">
  <!-- home -->
  <path d="M130,66.800 L141,56.800 L152,66.800"/>
  <path d="M133.200,65 V75.300 H138.300 V69.200 H143.700 V75.300 H148.800 V65"/>
  <!-- star -->
  <polygon points="200.2,55.6 203.7,63.6 212.4,64.4 205.8,70.2 207.7,78.8 200.2,74.3 192.7,78.8 194.6,70.2 188.0,64.4 196.7,63.6" stroke="#cfcfcf" stroke-width="2"/>
  <!-- close -->
  <path d="M452.300,60.600 L465.700,73.600 M465.700,60.600 L452.300,73.600" stroke="#d8d8d8" stroke-width="2.500"/>
  <!-- plus -->
  <path d="M503.500,67 H518 M510.700,59.800 V74.200" stroke-width="2"/>
  <!-- help -->
  <circle cx="1715.600" cy="66.600" r="10.400"/>
  <path d="M1712.600,63.600 q0,-3 3.100,-3 q3,0 3,2.700 q0,1.800 -1.700,2.900 q-1.400,1 -1.400,2.500" stroke-width="2.200"/>
  <!-- bell -->
  <path d="M1754,75.200 q-1.300,0 -.6,-1.200 l2.400,-4.300 v-5 q0,-8.600 7.800,-8.600 t7.800,8.600 v5 l2.400,4.300 q.7,1.200 -.6,1.200z"/>
  <path d="M1761.200,77 q2.400,3.200 4.800,0" stroke-width="2"/>
  <!-- apps grid -->
  <g stroke-width="1.700"><rect x="1801.6" y="57.5" width="4.300" height="4.300" rx=".8"/><rect x="1809.0" y="57.5" width="4.300" height="4.300" rx=".8"/><rect x="1801.6" y="64.9" width="4.300" height="4.300" rx=".8"/><rect x="1809.0" y="64.9" width="4.300" height="4.300" rx=".8"/><rect x="1816.4" y="64.9" width="4.300" height="4.300" rx=".8"/><rect x="1801.6" y="72.3" width="4.300" height="4.300" rx=".8"/><rect x="1809.0" y="72.3" width="4.300" height="4.300" rx=".8"/><rect x="1816.4" y="72.3" width="4.300" height="4.300" rx=".8"/></g>
  <!-- toolbar: search -->
  <circle cx="1473.300" cy="124.200" r="8.200" stroke-width="2.200"/>
  <path d="M1479.400,130.400 L1486.600,137.400" stroke-width="2.400"/>
  <!-- save (disabled) -->
  <g stroke="#767676" stroke-width="2">
   <path d="M1542.200,115.700 H1559 L1563.600,120.300 V135.500 H1542.200 Z"/>
   <path d="M1548,116 V121.600 H1557.600 V116"/>
   <path d="M1548,135.300 V127.600 H1557.800 V135.300"/>
  </g>
  <!-- cloud upload -->
  <path d="M1604.500,133.300 q-5,-.4 -5,-5 q0,-4.300 4.500,-5.200 q.4,-3.700 4,-4.200 q2.700,-4 7.200,-3 q3.600,1 4.300,4.700 q4.700,.5 4.700,5.200 q0,4.500 -4.400,5.400" stroke-width="2.100"/>
  <path d="M1612,139 V125.500 M1607.200,129.800 L1612,125 L1616.800,129.800" stroke-width="2.100"/>
  <!-- printer -->
  <path d="M1663,120 V115.300 H1680 V120"/>
  <path d="M1663,132.300 H1659 V120 H1684 V132.300 H1680"/>
  <rect x="1663.300" y="127.200" width="16.400" height="10.200"/>
  <path d="M1667.500,132.300 H1675.500" stroke-width="1.800"/>
  <!-- share person+ -->
  <path d="M1748.600,135.800 A11.600,11.600 0 1 1 1755.300,125.600" stroke-width="2.400"/>
  <path d="M1736.600,133.600 q.6,-4.600 4.600,-5.900 q-2.700,-1.800 -2.700,-5 q0,-4.600 4.700,-4.600 t4.700,4.600 q0,3.200 -2.700,5 q1.500,.5 2.600,1.500" stroke-width="2.300"/>
  <path d="M1746.500,133.800 H1757.300 M1751.900,128.400 V139.200" stroke-width="2.400"/>
  <!-- link -->
  <g stroke-width="2.500" transform="translate(1803.400,126.800) rotate(-45)">
   <path d="M-1.500,-3.300 H-9 A4.100,4.100 0 0 0 -9,4.900 H-2.400 A4.100,4.100 0 0 0 1.700,0.800"/>
   <path d="M1.500,3.300 H9 A4.100,4.100 0 0 0 9,-4.900 H2.400 A4.100,4.100 0 0 0 -1.700,-0.800"/>
  </g>
  <!-- share person+ v2 -->
  <!-- mail -->
  <rect x="1851.700" y="117" width="22.800" height="17.600" stroke-width="2.100"/>
  <path d="M1852,117.400 L1863.100,127.200 L1874.200,117.400 M1852,134.300 L1859.800,124.500 M1874.200,134.300 L1866.400,124.500" stroke-width="2"/>
 </g>
 <circle cx="1715.700" cy="72.400" r="1.400" fill="#e4e4e4"/>
 <circle cx="1819" cy="58.900" r="5.500" fill="#2680eb"/>
 <!-- avatar -->
 <g>
  <circle cx="1858.300" cy="66.600" r="13.600" fill="#6fb6f0"/>
  <circle cx="1858.800" cy="67.200" r="10" fill="#1c62d6"/>
  <path d="M1851,58 l5,7" stroke="#e8d23a" stroke-width="2.200"/>
  <path d="M1850.200,66 l2,7" stroke="#c7283c" stroke-width="2.500"/>
  <path d="M1861.500,57.500 l2,3.500" stroke="#c7283c" stroke-width="2.500"/>
  <circle cx="1866" cy="65.500" r="1.800" fill="#e8d23a"/>
  <circle cx="1853.300" cy="77" r="1.600" fill="#c7283c"/>
  <path d="M1855.800,72.500 q1.200,1.500 2.400,0 M1861,72.500 q1.200,1.500 2.400,0" stroke="#fff" stroke-width="1.200" fill="none"/>
  <circle cx="1864" cy="69.500" r="1.200" fill="#fff"/>
 </g>
</svg>


<!-- ===== PALETTE + RIGHT PANEL ICONS ===== -->
<svg id="side" style="left:0;top:0" width="1900" height="1188" viewBox="0 0 1900 1188">
 <rect x="24.200" y="186" width="47" height="5.800" rx="2.900" fill="#6e6e6e"/>
 <rect x="23.800" y="204" width="47.800" height="47" rx="5" fill="#1473e6"/>
 <path d="M41.200,215.600 V234.600 L45.700,230.400 L49.200,238 L52.600,236.400 L49.200,229 L55.200,228.600 Z" fill="#fff"/>
 <path d="M65.400,237.7 V245 H58.1 Z" fill="#e8eef8"/><path d="M65.400,297 V304 H58.4 Z" fill="#d4d4d4"/><path d="M65.400,356.8 V364 H58.2 Z" fill="#d4d4d4"/><path d="M65.400,416.2 V423.2 H58.4 Z" fill="#d4d4d4"/><path d="M65.400,476 V483 H58.4 Z" fill="#d4d4d4"/><path d="M65.400,535 V542 H58.4 Z" fill="#d4d4d4"/>
 <g fill="none" stroke="#e4e4e4" stroke-width="2.100" stroke-linecap="round" stroke-linejoin="round">
  <!-- comment+ -->
  <path d="M39.600,276.600 H55 Q57.400,276.600 57.400,279 V288.600 Q57.400,291 55,291 H49.600 L43.600,297.400 V291 H39.600 Q37.200,291 37.200,288.600 V279 Q37.200,276.600 39.600,276.600 Z"/>
  <path d="M43.200,283.800 H51.400 M47.300,279.700 V287.900" stroke-width="2"/>
  <!-- highlighter -->
  <path d="M41.600,348.800 L54.800,335.200 Q56,334 57.200,335.200 L59.400,337.400 Q60.600,338.600 59.400,339.800 L46.200,353.200 Z"/>
  <!-- lasso -->
  <path d="M52.600,408 Q46,404.500 52.600,402.800 Q60.500,402.200 59,399.500 Q55,396.600 46,398.200 Q36,400.500 36,406.500 Q36.500,413.200 47,413.800 Q50.500,413.800 52.500,413"/>
  <!-- text box -->
  <rect x="35.200" y="452.800" width="25" height="23.400" stroke-width="2.300" stroke-dasharray="3.200 2.100" stroke-linecap="butt"/>
  <path d="M42.600,471 L47.600,457.800 L52.600,471 M44.300,466.600 H50.900" stroke-width="2"/>
  <!-- pen sign -->
  <path d="M35.200,534 L38,523.500 L47.500,514.500 L55.600,522.200 L46.500,531.500 L36,534.200 Z"/>
  <path d="M47.500,514.500 L50.300,512.600 L57.600,519.700 L55.600,522.200" />
  <path d="M36.500,533 L44.600,525.200"/>
  <circle cx="45.400" cy="524.400" r="1.400"/>
  <path d="M49,533.500 q3,-.5 4.500,-4.500 q.5,4 2,3.500 q1.500,-.5 2,-3 q.6,2.600 2.700,2.800" stroke-width="1.900"/>
  <!-- right: comments -->
  <path d="M1872.600,190.600 H1874 Q1876.600,190.600 1876.600,193.200 V203 Q1876.600,205.600 1874,205.600 H1873 V210 L1868.600,206.600"/>
  <path d="M1854.800,187 H1867.600 Q1870.200,187 1870.200,189.600 V199.200 Q1870.200,201.800 1867.600,201.800 H1861.600 L1857.400,205.800 V201.800 H1854.800 Q1852.300,201.800 1852.300,199.200 V189.600 Q1852.300,187 1854.800,187 Z"/>
  <!-- right: bookmark -->
  <path d="M1852.500,245.300 H1867.800 V268.700 L1860.150,262.300 L1852.500,268.700 Z"/>
  <path d="M1871.200,249.800 H1877.200 M1871.200,253.700 H1877.200 M1871.200,257.600 H1877.200" stroke-width="1.700"/>
  <!-- right: grid -->
  <g stroke-width="2" stroke-linejoin="miter">
   <rect x="1855.200" y="305.400" width="7.200" height="7.200"/><rect x="1867.100" y="305.400" width="7.200" height="7.200"/>
   <rect x="1855.200" y="316.900" width="7.200" height="7.200"/><rect x="1867.100" y="316.900" width="7.200" height="7.200"/>
  </g>
  <!-- chevrons -->
  <path d="M1860,777 L1866.200,771 L1872.400,777" stroke-width="2.900" stroke="#dadada"/>
  <path d="M1860,818.200 L1866.200,824.200 L1872.400,818.200" stroke-width="2.900" stroke="#dadada"/>
  <!-- rotate -->
  <path d="M1875.800,895.300 A10.300,10.300 0 1 1 1872.600,881.500" stroke-width="2.200"/>
  <path d="M1876.800,879.200 V886.400 H1869.600" stroke-width="2.200"/>
  <!-- page fit -->
  <path d="M1858.600,932.800 H1869 L1875.800,939.600 V952.600 Q1875.800,955.200 1873.200,955.200 H1858.600 Q1856,955.200 1856,952.600 V935.400 Q1856,932.800 1858.600,932.800 Z" stroke-width="2.200"/>
  <path d="M1869,933 V939.600 H1875.600" stroke-width="2"/>
  <path d="M1865.800,941.800 H1869.800 V945.800 M1861.200,946.800 V950.800 H1865.200" stroke-width="1.900"/>
  <!-- zoom+ -->
  <circle cx="1864.600" cy="1000.500" r="8.500" stroke-width="2.200"/>
  <path d="M1870.900,1006.800 L1877.200,1012.600" stroke-width="2.400"/>
  <path d="M1860.300,1000.500 H1868.900 M1864.600,996.200 V1004.800" stroke-width="2"/>
  <!-- zoom- (mostly hidden) -->
  <circle cx="1864.600" cy="1046.500" r="8.500" stroke-width="2.200"/>
 </g>
 <path d="M39.600,350.800 L43.200,356.500 H34.600 Z" fill="#e4e4e4"/>
 <path d="M47.800,351.600 H59 L56,356.600 H44.600 Z" fill="#8c8c8c"/>
 <circle cx="39" cy="583" r="2" fill="#e4e4e4"/><circle cx="47.400" cy="583" r="2" fill="#e4e4e4"/><circle cx="55.700" cy="583" r="2" fill="#e4e4e4"/>
 <path d="M1881,954 V961.3 H1873.7 Z" fill="#d4d4d4"/>
 <!-- page box -->
 <rect x="1841.500" y="647.200" width="45.600" height="45.600" rx="5" fill="#1e1e1e" stroke="#757575" stroke-width="1.200"/>
 <rect x="1840" y="853.800" width="50" height="1" fill="#555"/>
</svg>
<div class="tt" style="left:1858.300px;top:657.1px;font-size:19.900px" id="p2">2</div>
<div class="tt" style="left:1858.600px;top:708.9px;font-size:19.500px" id="p9">9</div>


<!-- ===== THUMBNAIL ===== -->
<div class="abs" style="left:1680.5px;top:1039px;width:201px;height:129.500px;background:#000;border-radius:7px;box-shadow:0 2px 10px rgba(0,0,0,.65)"></div>
<svg id="thumb" style="left:1686px;top:1044.500px" width="190.500" height="119.500" viewBox="0 0 1905 1195">
 <defs>
  <linearGradient id="tg1" x1="0" y1="0" x2="1" y2="0"><stop offset="0" stop-color="#4a1a9c"/><stop offset="1" stop-color="#2f0aa0"/></linearGradient>
  <linearGradient id="tg2" x1="0" y1="0" x2="1" y2="0"><stop offset="0" stop-color="#15063a"/><stop offset=".55" stop-color="#1f0a50"/><stop offset=".72" stop-color="#5a0d8a"/><stop offset="1" stop-color="#1a0645"/></linearGradient>
 </defs>
 <rect x="0" y="0" width="1905" height="1195" fill="#1e1e1e"/>
 <rect x="0" y="0" width="1905" height="38" fill="url(#tg1)"/>
 <rect x="0" y="95" width="1905" height="70" fill="#2a2a2a"/>
 <rect x="0" y="1085" width="1905" height="110" fill="url(#tg2)"/>
 <rect x="250" y="165" width="1425" height="920" fill="#fff"/>
 <rect x="1830" y="165" width="75" height="920" fill="#303030"/>
 <rect x="170" y="48" width="310" height="47" fill="#2a2a2a"/>
 <!-- menu text smudges -->
 <g fill="#cdbdf0" opacity=".55"><rect x="30" y="12" width="18" height="20"/><rect x="80" y="12" width="72" height="18"/><rect x="186" y="14" width="30" height="14"/><rect x="248" y="14" width="32" height="14"/><rect x="314" y="14" width="40" height="14"/><rect x="388" y="14" width="68" height="14"/><rect x="490" y="14" width="38" height="14"/>
  <rect x="1195" y="12" width="26" height="18"/><rect x="1254" y="12" width="26" height="18"/><rect x="1308" y="12" width="22" height="18"/><rect x="1361" y="12" width="18" height="18"/><rect x="1410" y="12" width="24" height="18"/><rect x="1462" y="12" width="34" height="16"/><rect x="1526" y="12" width="24" height="16"/><rect x="1580" y="12" width="16" height="18"/><rect x="1626" y="12" width="20" height="18"/><rect x="1716" y="13" width="156" height="16"/></g>
 <circle cx="27" cy="68" r="9" fill="#fe5f57"/><circle cx="56" cy="68" r="9" fill="#febc2e"/><circle cx="86" cy="68" r="9" fill="#28c840"/>
 <g fill="#c9c9c9" opacity=".5"><rect x="130" y="58" width="22" height="20"/><rect x="190" y="58" width="20" height="20"/><rect x="224" y="60" width="138" height="16"/><rect x="452" y="61" width="14" height="14"/><rect x="505" y="61" width="12" height="12"/><rect x="533" y="62" width="46" height="12"/>
  <rect x="1706" y="56" width="20" height="22"/><rect x="1754" y="56" width="20" height="22"/><rect x="1802" y="57" width="20" height="20"/>
  <rect x="22" y="120" width="68" height="16"/><rect x="126" y="120" width="32" height="16"/><rect x="194" y="120" width="66" height="16"/><rect x="296" y="120" width="36" height="16"/><rect x="1307" y="118" width="140" height="16"/><rect x="1465" y="116" width="20" height="22"/><rect x="1600" y="116" width="24" height="22"/><rect x="1660" y="116" width="24" height="22"/><rect x="1732" y="116" width="24" height="22"/><rect x="1792" y="116" width="22" height="22"/><rect x="1852" y="118" width="22" height="18"/></g>
 <circle cx="1858" cy="67" r="13" fill="#4d8fe6"/>
 <rect x="1543" y="116" width="20" height="20" fill="#666"/>
 <!-- palette -->
 <rect x="18" y="182" width="59" height="432" rx="6" fill="#333"/>
 <rect x="24" y="205" width="47" height="47" rx="5" fill="#1473e6"/>
 <g fill="#cfcfcf" opacity=".8"><path d="M41,216 v20 l5,-4 l4,7 l3,-2 l-4,-7 l6,-1z" fill="#fff"/><rect x="37" y="277" width="20" height="20"/><rect x="36" y="335" width="22" height="20"/><rect x="36" y="398" width="22" height="16"/><rect x="35" y="453" width="24" height="23"/><rect x="35" y="513" width="24" height="22"/><rect x="38" y="581" width="19" height="4"/></g>
 <g fill="#cfcfcf" opacity=".7"><rect x="1853" y="188" width="22" height="22"/><rect x="1853" y="246" width="22" height="22"/><rect x="1855" y="305" width="20" height="20"/><rect x="1858" y="661" width="12" height="14"/><rect x="1858" y="712" width="12" height="14"/><rect x="1860" y="771" width="12" height="6"/><rect x="1860" y="818" width="12" height="6"/><rect x="1856" y="880" width="20" height="20"/><rect x="1856" y="933" width="20" height="22"/><rect x="1856" y="992" width="20" height="20"/><rect x="1856" y="1040" width="20" height="20"/></g>
 <!-- mini page drawing -->
 <g fill="none" stroke="#9a9a9a" stroke-width="6">
  <rect x="955" y="298" width="228" height="148"/>
  <path d="M585,498 H1160 L1285,520 V690 H1160 L940,700 H585 Z" stroke="#777" stroke-width="8"/>
  <path d="M930,700 L950,725 V740 H920 V860 H1180 V710 L1210,690" stroke="#8a8a8a"/>
 </g>
 <g fill="none" stroke="#c4c4c4" stroke-width="5">
  <circle cx="560" cy="470" r="55"/><circle cx="610" cy="455" r="24"/><rect x="655" y="445" width="40" height="28"/>
  <path d="M585,430 V900 M1285,290 V1070 M1475,300 V1060 M1320,300 q60,80 0,160 M1320,600 q70,80 0,170"/>
  <path d="M640,520 H900 M700,560 V680 M760,520 V690 M820,560 H1000 M900,520 V700 M1000,540 V690 M1080,520 V680 M1160,540 V690 M1200,560 H1280 M640,620 H780 M840,600 H960 M1040,610 H1150"/>
  <path d="M625,740 H700 M625,765 H700 M625,790 H700 M625,815 H700 M625,840 H700 M625,865 H700 M735,740 H780 M735,765 H780 M735,790 H780 M735,815 H780 M735,840 H780 M800,820 H900 M800,845 H900 M800,870 H900"/>
  <ellipse cx="1030" cy="770" rx="40" ry="16"/>
  <path d="M1030,345 l30,25 l-30,25z M1030,740 l30,25 l-30,25z" fill="#aaa" stroke="none"/>
  <circle cx="1160" cy="480" r="22"/><circle cx="1175" cy="640" r="22"/><circle cx="1160" cy="760" r="20"/>
 </g>
 <g fill="#777" opacity=".8"><rect x="740" y="515" width="30" height="26"/><rect x="770" y="590" width="30" height="26"/><rect x="1000" y="560" width="36" height="30"/><rect x="1090" y="570" width="30" height="40"/><rect x="850" y="655" width="30" height="26"/><rect x="1130" y="650" width="26" height="26"/><rect x="1200" y="610" width="60" height="70" fill="#cfcfcf"/></g>
 <!-- mini title block -->
 <g fill="none" stroke="#8a8a8a" stroke-width="5"><rect x="282" y="960" width="1370" height="96"/><path d="M732,960 V1056 M897,960 V1056 M1110,960 V1056 M1464,960 V1056 M1572,960 V1056 M732,1006 H897"/></g>
 <g fill="#9a9a9a"><rect x="295" y="968" width="70" height="8"/><rect x="295" y="982" width="130" height="5"/><rect x="295" y="993" width="120" height="5"/><rect x="295" y="1004" width="130" height="5"/><rect x="295" y="1015" width="125" height="5"/><rect x="295" y="1026" width="130" height="5"/><rect x="295" y="1037" width="100" height="5"/>
  <rect x="442" y="975" width="130" height="5"/><rect x="442" y="986" width="125" height="5"/><rect x="442" y="1000" width="90" height="5"/><rect x="442" y="1012" width="125" height="5"/><rect x="442" y="1023" width="130" height="5"/><rect x="442" y="1040" width="125" height="5"/>
  <rect x="592" y="972" width="120" height="5"/><rect x="592" y="983" width="125" height="5"/><rect x="592" y="994" width="110" height="5"/>
  <rect x="742" y="968" width="40" height="6"/><rect x="742" y="983" width="128" height="7"/><rect x="766" y="1023" width="96" height="7"/><rect x="905" y="972" width="140" height="7"/><rect x="905" y="1016" width="66" height="7"/><rect x="905" y="1038" width="76" height="7"/><rect x="1280" y="1020" width="100" height="5"/><rect x="1280" y="1030" width="100" height="5"/><rect x="1280" y="1040" width="60" height="5"/><rect x="1280" y="1048" width="104" height="5"/><rect x="1478" y="967" width="50" height="6"/><rect x="1478" y="980" width="90" height="5"/><rect x="1608" y="1002" width="26" height="16" fill="#555"/></g>
 <circle cx="672" cy="1028" r="20" fill="none" stroke="#8a8a8a" stroke-width="4"/>
 <rect x="1117" y="966" width="158" height="70" fill="#2a5590"/>
 <rect x="1117" y="1042" width="66" height="9" fill="#777"/><rect x="1188" y="1042" width="88" height="9" fill="#b79a3c"/>
 <rect x="5" y="5" width="1895" height="1185" fill="none" stroke="#fff" stroke-width="10"/>
</svg>

<!-- ===== WATERMARK ===== -->
<div class="abs" id="wm" style="left:568.5px;top:1094.3px;font-size:42.6px;line-height:1;color:#ebe2f0;white-space:nowrap;transform-origin:0 50%;transform:scaleX(.966)">RE/MAX GOLD REALTY INC., Brokerage</div>

</body>
</html>
